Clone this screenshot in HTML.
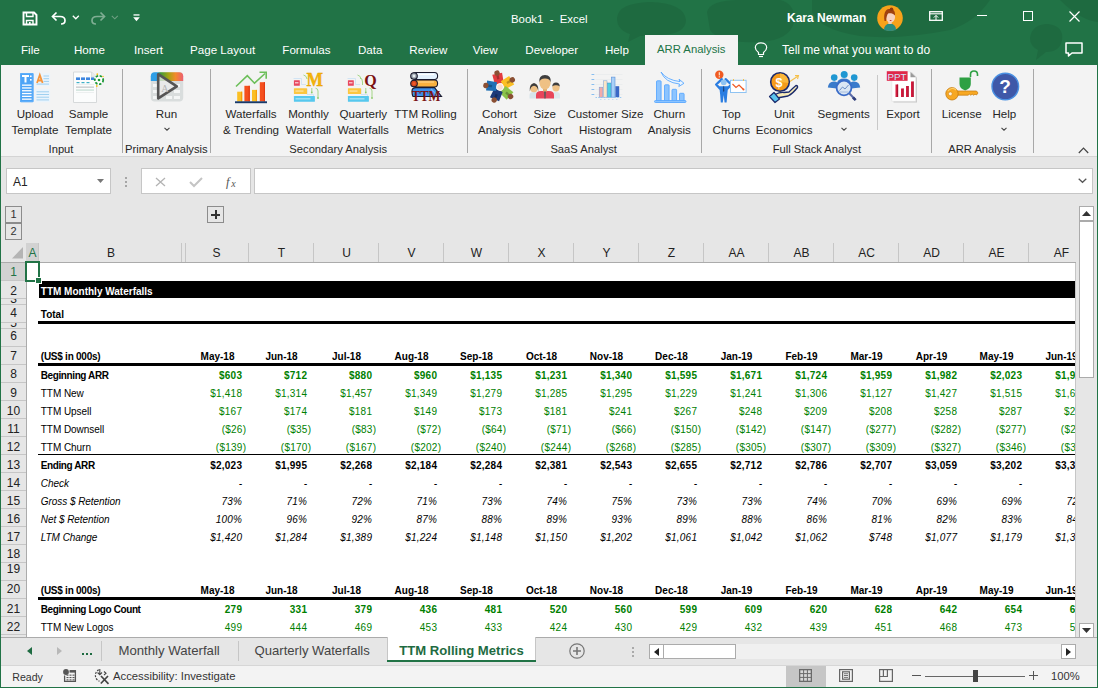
<!DOCTYPE html>
<html><head><meta charset="utf-8"><style>
html,body{margin:0;padding:0;}
body{width:1098px;height:688px;overflow:hidden;position:relative;background:#e6e6e6;font-family:"Liberation Sans",sans-serif;}
.r{position:absolute;}
.t{position:absolute;white-space:pre;}
</style></head><body>
<div class="r" style="left:0px;top:0px;width:1098px;height:65px;background:#217346;"></div><svg class="r" style="left:0px;top:0px;overflow:visible" width="1098" height="65" viewBox="0 0 1098 65">
<g fill="#1c5e39" opacity="0.42">
<path d="M617 18 Q618 3 650 2 Q684 3 686 20 Q686 34 660 35 L640 36 L628 42 L630 34 Q617 30 617 18 Z"/>
<path d="M707 12 Q710 0 740 0 H780 Q796 4 794 22 Q790 40 760 42 Q720 44 710 30 Z"/>
<path d="M812 0 H990 Q975 22 950 30 Q900 40 860 36 Q820 30 812 12 Z"/>
<path d="M1030 38 Q1032 24 1048 24 Q1064 26 1062 40 Q1060 52 1046 52 L1036 60 L1038 50 Q1030 46 1030 38 Z"/>
<path d="M1060 0 H1098 V22 Q1080 20 1060 0 Z"/>
</g></svg><svg class="r" style="left:22px;top:11px;overflow:visible" width="16" height="15" viewBox="0 0 16 15"><path d="M1.5 1.5 H12 L14.5 4 V13.5 H1.5 Z" fill="none" stroke="#fff" stroke-width="1.9"/>
    <path d="M4.5 1.5 V5.5 H11 V1.5" fill="none" stroke="#fff" stroke-width="1.4"/>
    <path d="M4.5 13.5 V9.5 H11 V13.5" fill="none" stroke="#fff" stroke-width="1.4"/>
    <rect x="7" y="11" width="1.6" height="2.5" fill="#fff"/></svg><svg class="r" style="left:51px;top:11px;overflow:visible" width="16" height="14" viewBox="0 0 16 14"><path d="M2 5.5 H9 C12.5 5.5 14 7.5 14 9.5 C14 11.5 12.5 13 10 13" fill="none" stroke="#fff" stroke-width="1.7"/>
    <path d="M5.5 1.5 L1.5 5.5 L5.5 9.5" fill="none" stroke="#fff" stroke-width="1.7"/></svg><svg class="r" style="left:72px;top:15px;overflow:visible" width="8" height="5" viewBox="0 0 8 5"><path d="M0.8 0.8 L3.8 3.8 L6.8 0.8" fill="none" stroke="#fff" stroke-width="1.3"/></svg><svg class="r" style="left:90px;top:11px;overflow:visible" width="16" height="14" viewBox="0 0 16 14"><path d="M14 5.5 H7 C3.5 5.5 2 7.5 2 9.5 C2 11.5 3.5 13 6 13" fill="none" stroke="#7fae93" stroke-width="1.7"/>
    <path d="M10.5 1.5 L14.5 5.5 L10.5 9.5" fill="none" stroke="#7fae93" stroke-width="1.7"/></svg><svg class="r" style="left:111px;top:15px;overflow:visible" width="8" height="5" viewBox="0 0 8 5"><path d="M0.8 0.8 L3.8 3.8 L6.8 0.8" fill="none" stroke="#6f9f83" stroke-width="1.1"/></svg><svg class="r" style="left:133px;top:14px;overflow:visible" width="7" height="8" viewBox="0 0 7 8"><rect x="0.5" y="0.3" width="6" height="1.3" fill="#fff"/><path d="M0.2 3.2 H6.8 L3.5 7.2 Z" fill="#fff"/></svg><div class="t" style="top:13.65px;font-size:11.4px;line-height:11.4px;color:#fff;left:511px;">Book1  -  Excel</div><div class="t" style="top:11.54px;font-size:12px;line-height:12px;color:#fff;font-weight:bold;left:787px;">Kara Newman</div><svg class="r" style="left:877px;top:5px;overflow:visible" width="26" height="26" viewBox="0 0 26 26"><circle cx="13" cy="13" r="12.8" fill="#f7a21b"/>
    <path d="M7 25 Q7 19 13 18.5 Q19 19 19 25 Q13 27 7 25 Z" fill="#2b8b7e"/>
    <rect x="11.3" y="15" width="3.4" height="4" fill="#f3c9b5"/>
    <ellipse cx="13.5" cy="12" rx="4.6" ry="5.6" fill="#f6d2c0"/>
    <path d="M7.5 16 C6.5 9 8 4.5 12 4 C16.5 3.6 18.5 6.5 18 10.5 C16.5 8.5 14 8 11.5 8.2 C10 9 9.5 12 9 16 Z" fill="#a1420f"/>
    <circle cx="14.5" cy="4.2" r="1.8" fill="#8f3a0e"/>
    <rect x="12.8" y="15" width="1.6" height="0.9" fill="#c0262c"/></svg><svg class="r" style="left:929px;top:11px;overflow:visible" width="14" height="10" viewBox="0 0 14 10"><rect x="0.7" y="0.7" width="12.6" height="8.6" fill="none" stroke="#fff" stroke-width="1.3"/>
    <path d="M0.7 2.8 H13.3" stroke="#fff" stroke-width="1.1"/>
    <path d="M7 9 V4.5 M4.8 6.6 L7 4.4 L9.2 6.6" stroke="#fff" stroke-width="1" fill="none"/></svg><div class="r" style="left:977px;top:15px;width:10px;height:1.2px;background:#fff;"></div><div class="r" style="left:1023px;top:11px;width:10px;height:10px;border:1.2px solid #fff;box-sizing:border-box;"></div><svg class="r" style="left:1069px;top:11px;overflow:visible" width="11" height="11" viewBox="0 0 11 11"><path d="M0.5 0.5 L10.5 10.5 M10.5 0.5 L0.5 10.5" stroke="#fff" stroke-width="1.2"/></svg><svg class="r" style="left:754px;top:42px;overflow:visible" width="14" height="16" viewBox="0 0 14 16"><path d="M4.5 10.5 C2.5 9 1.3 7.3 1.3 5.5 C1.3 2.8 3.6 0.8 7 0.8 C10.4 0.8 12.7 2.8 12.7 5.5 C12.7 7.3 11.5 9 9.5 10.5 V12.5 H4.5 Z" fill="none" stroke="#fff" stroke-width="1.2"/>
    <path d="M5 14.5 H9" stroke="#fff" stroke-width="1.2"/></svg><svg class="r" style="left:1065px;top:42px;overflow:visible" width="18" height="15" viewBox="0 0 18 15"><path d="M1 1 H17 V11 H7 L3.5 14 V11 H1 Z" fill="none" stroke="#fff" stroke-width="1.5" stroke-linejoin="round"/></svg><div class="t" style="top:44.18px;font-size:11.6px;line-height:11.6px;color:#fff;left:21px;width:28px;">File</div><div class="t" style="top:44.18px;font-size:11.6px;line-height:11.6px;color:#fff;left:74px;width:43.3px;">Home</div><div class="t" style="top:44.18px;font-size:11.6px;line-height:11.6px;color:#fff;left:134px;width:39px;">Insert</div><div class="t" style="top:44.18px;font-size:11.6px;line-height:11.6px;color:#fff;left:190px;width:75px;">Page Layout</div><div class="t" style="top:44.18px;font-size:11.6px;line-height:11.6px;color:#fff;left:282.3px;width:58.7px;">Formulas</div><div class="t" style="top:44.18px;font-size:11.6px;line-height:11.6px;color:#fff;left:358px;width:34px;">Data</div><div class="t" style="top:44.18px;font-size:11.6px;line-height:11.6px;color:#fff;left:409.3px;width:46.7px;">Review</div><div class="t" style="top:44.18px;font-size:11.6px;line-height:11.6px;color:#fff;left:472.7px;width:35.3px;">View</div><div class="t" style="top:44.18px;font-size:11.6px;line-height:11.6px;color:#fff;left:525.3px;width:62.7px;">Developer</div><div class="t" style="top:44.18px;font-size:11.6px;line-height:11.6px;color:#fff;left:605px;width:35px;">Help</div><div class="r" style="left:645px;top:35px;width:93px;height:30px;background:#f3f3f3;"></div><div class="t" style="top:44.43px;font-size:11.3px;line-height:11.3px;color:#217346;left:657px;">ARR Analysis</div><div class="t" style="top:43.84px;font-size:12px;line-height:12px;color:#fff;left:782px;">Tell me what you want to do</div><div class="r" style="left:1px;top:65px;width:1096px;height:92px;background:#f3f3f3;"></div><div class="r" style="left:1px;top:156px;width:1096px;height:1px;background:#d4d4d4;"></div><div class="r" style="left:122px;top:69px;width:1px;height:84px;background:#a8a8a8;"></div><div class="r" style="left:210px;top:69px;width:1px;height:84px;background:#a8a8a8;"></div><div class="r" style="left:467px;top:69px;width:1px;height:84px;background:#a8a8a8;"></div><div class="r" style="left:701px;top:69px;width:1px;height:84px;background:#a8a8a8;"></div><div class="r" style="left:931px;top:69px;width:1px;height:84px;background:#a8a8a8;"></div><div class="r" style="left:1033px;top:69px;width:1px;height:84px;background:#a8a8a8;"></div><div class="r" style="left:877px;top:75px;width:1px;height:55px;background:#c8c8c8;"></div><div class="t" style="top:107.68px;font-size:11.6px;line-height:11.6px;color:#262626;left:-25.00px;width:120px;text-align:center;">Upload</div><div class="t" style="top:124.08px;font-size:11.6px;line-height:11.6px;color:#262626;left:-25.00px;width:120px;text-align:center;">Template</div><div class="t" style="top:107.68px;font-size:11.6px;line-height:11.6px;color:#262626;left:28.50px;width:120px;text-align:center;">Sample</div><div class="t" style="top:124.08px;font-size:11.6px;line-height:11.6px;color:#262626;left:28.50px;width:120px;text-align:center;">Template</div><div class="t" style="top:107.68px;font-size:11.6px;line-height:11.6px;color:#262626;left:106.50px;width:120px;text-align:center;">Run</div><svg class="r" style="left:163.5px;top:127px;overflow:visible" width="6" height="4" viewBox="0 0 6 4"><path d="M0.5 0.8 L3 3.2 L5.5 0.8" stroke="#444" stroke-width="1.1" fill="none"/></svg><div class="t" style="top:107.68px;font-size:11.6px;line-height:11.6px;color:#262626;left:191.00px;width:120px;text-align:center;">Waterfalls</div><div class="t" style="top:124.08px;font-size:11.6px;line-height:11.6px;color:#262626;left:191.00px;width:120px;text-align:center;">&amp; Trending</div><div class="t" style="top:107.68px;font-size:11.6px;line-height:11.6px;color:#262626;left:248.50px;width:120px;text-align:center;">Monthly</div><div class="t" style="top:124.08px;font-size:11.6px;line-height:11.6px;color:#262626;left:248.50px;width:120px;text-align:center;">Waterfall</div><div class="t" style="top:107.68px;font-size:11.6px;line-height:11.6px;color:#262626;left:303.30px;width:120px;text-align:center;">Quarterly</div><div class="t" style="top:124.08px;font-size:11.6px;line-height:11.6px;color:#262626;left:303.30px;width:120px;text-align:center;">Waterfalls</div><div class="t" style="top:107.68px;font-size:11.6px;line-height:11.6px;color:#262626;left:365.50px;width:120px;text-align:center;">TTM Rolling</div><div class="t" style="top:124.08px;font-size:11.6px;line-height:11.6px;color:#262626;left:365.50px;width:120px;text-align:center;">Metrics</div><div class="t" style="top:107.68px;font-size:11.6px;line-height:11.6px;color:#262626;left:439.50px;width:120px;text-align:center;">Cohort</div><div class="t" style="top:124.08px;font-size:11.6px;line-height:11.6px;color:#262626;left:439.50px;width:120px;text-align:center;">Analysis</div><div class="t" style="top:107.68px;font-size:11.6px;line-height:11.6px;color:#262626;left:484.80px;width:120px;text-align:center;">Size</div><div class="t" style="top:124.08px;font-size:11.6px;line-height:11.6px;color:#262626;left:484.80px;width:120px;text-align:center;">Cohort</div><div class="t" style="top:107.68px;font-size:11.6px;line-height:11.6px;color:#262626;left:545.50px;width:120px;text-align:center;">Customer Size</div><div class="t" style="top:124.08px;font-size:11.6px;line-height:11.6px;color:#262626;left:545.50px;width:120px;text-align:center;">Histogram</div><div class="t" style="top:107.68px;font-size:11.6px;line-height:11.6px;color:#262626;left:609.30px;width:120px;text-align:center;">Churn</div><div class="t" style="top:124.08px;font-size:11.6px;line-height:11.6px;color:#262626;left:609.30px;width:120px;text-align:center;">Analysis</div><div class="t" style="top:107.68px;font-size:11.6px;line-height:11.6px;color:#262626;left:671.30px;width:120px;text-align:center;">Top</div><div class="t" style="top:124.08px;font-size:11.6px;line-height:11.6px;color:#262626;left:671.30px;width:120px;text-align:center;">Churns</div><div class="t" style="top:107.68px;font-size:11.6px;line-height:11.6px;color:#262626;left:724.20px;width:120px;text-align:center;">Unit</div><div class="t" style="top:124.08px;font-size:11.6px;line-height:11.6px;color:#262626;left:724.20px;width:120px;text-align:center;">Economics</div><div class="t" style="top:107.68px;font-size:11.6px;line-height:11.6px;color:#262626;left:783.70px;width:120px;text-align:center;">Segments</div><svg class="r" style="left:840.7px;top:127px;overflow:visible" width="6" height="4" viewBox="0 0 6 4"><path d="M0.5 0.8 L3 3.2 L5.5 0.8" stroke="#444" stroke-width="1.1" fill="none"/></svg><div class="t" style="top:107.68px;font-size:11.6px;line-height:11.6px;color:#262626;left:843.00px;width:120px;text-align:center;">Export</div><div class="t" style="top:107.68px;font-size:11.6px;line-height:11.6px;color:#262626;left:901.70px;width:120px;text-align:center;">License</div><div class="t" style="top:107.68px;font-size:11.6px;line-height:11.6px;color:#262626;left:944.40px;width:120px;text-align:center;">Help</div><svg class="r" style="left:1001.4px;top:127px;overflow:visible" width="6" height="4" viewBox="0 0 6 4"><path d="M0.5 0.8 L3 3.2 L5.5 0.8" stroke="#444" stroke-width="1.1" fill="none"/></svg><div class="t" style="top:143.82px;font-size:11.2px;line-height:11.2px;color:#262626;left:-19.00px;width:160px;text-align:center;">Input</div><div class="t" style="top:143.82px;font-size:11.2px;line-height:11.2px;color:#262626;left:86.30px;width:160px;text-align:center;">Primary Analysis</div><div class="t" style="top:143.82px;font-size:11.2px;line-height:11.2px;color:#262626;left:258.20px;width:160px;text-align:center;">Secondary Analysis</div><div class="t" style="top:143.82px;font-size:11.2px;line-height:11.2px;color:#262626;left:503.70px;width:160px;text-align:center;">SaaS Analyst</div><div class="t" style="top:143.82px;font-size:11.2px;line-height:11.2px;color:#262626;left:736.90px;width:160px;text-align:center;">Full Stack Analyst</div><div class="t" style="top:143.82px;font-size:11.2px;line-height:11.2px;color:#262626;left:902.20px;width:160px;text-align:center;">ARR Analysis</div><svg class="r" style="left:1078px;top:147px;overflow:visible" width="11" height="7" viewBox="0 0 11 7"><path d="M0.8 6 L5.5 1.2 L10.2 6" stroke="#444" stroke-width="1.2" fill="none"/></svg><svg class="r" style="left:19px;top:72px;overflow:visible" width="33" height="32" viewBox="0 0 33 32">
    <rect x="1" y="1" width="13.6" height="29.2" rx="1" fill="#4ea4f6"/>
    <rect x="1.6" y="1.6" width="12.4" height="28" rx="0.8" fill="none" stroke="#6fb8ff" stroke-width="0.6"/>
    <path d="M3 3 H10 V5 H7.5 V10.5 H5.5 V5 H3 Z" fill="#fff"/>
    <rect x="11" y="3.5" width="1.6" height="1.6" fill="#fff"/><rect x="11" y="7" width="1.6" height="1.6" fill="#fff"/>
    <g fill="#fff"><rect x="3" y="12.5" width="9.6" height="1.3"/><rect x="3" y="15.3" width="9.6" height="1.3"/><rect x="3" y="18.1" width="9.6" height="1.3"/>
    <rect x="3" y="20.9" width="9.6" height="1.3"/><rect x="3" y="23.7" width="9.6" height="1.3"/><rect x="3" y="26.5" width="9.6" height="1.3"/></g>
    <rect x="16.5" y="1.2" width="14.6" height="12.8" fill="#eaf4fc"/>
    <path d="M18 11 L20.8 3 L23.6 11 M19 8.5 H22.6" stroke="#f7953a" stroke-width="1.8" fill="none"/>
    <g fill="#9fd0f0"><rect x="24.5" y="3.5" width="5.5" height="1"/><rect x="24.5" y="6.2" width="5.5" height="1"/><rect x="24.5" y="8.9" width="5.5" height="1"/><rect x="17.5" y="11.6" width="12.5" height="1"/></g>
    <rect x="16.5" y="17" width="14.6" height="13.2" fill="#eaf4fc"/>
    <g fill="#9fd0f0"><rect x="17.5" y="19.3" width="12.5" height="1"/><rect x="17.5" y="22" width="12.5" height="1"/><rect x="17.5" y="24.7" width="12.5" height="1"/><rect x="17.5" y="27.4" width="12.5" height="1"/></g>
    </svg><svg class="r" style="left:72px;top:71px;overflow:visible" width="32" height="33" viewBox="0 0 32 33">
    <path d="M1.5 1 H19.5 L24.5 6 V31.5 H1.5 Z" fill="#fbfcfc" stroke="#d6d9da" stroke-width="1"/>
    <path d="M19.5 1 V6 H24.5" fill="#e8eaeb" stroke="#d6d9da" stroke-width="0.8"/>
    <g fill="#3d86e0"><rect x="4" y="6.4" width="4" height="2.6"/><rect x="9" y="6.4" width="4" height="2.6"/><rect x="14" y="6.4" width="4" height="2.6"/><rect x="19" y="6.4" width="3" height="2.6"/></g>
    <g fill="#3fb0c8"><rect x="4.5" y="11" width="3" height="1.2"/><rect x="9.5" y="11" width="3" height="1.2"/><rect x="14.5" y="11" width="3" height="1.2"/></g>
    <g fill="#c4c8ca"><rect x="4" y="15.5" width="18" height="1.3"/></g>
    <g fill="#bfd9cf"><rect x="4" y="18.5" width="18" height="1.1"/></g>
    <g fill="#e3e6e7"><rect x="4" y="13.2" width="18" height="0.6"/><rect x="4" y="21" width="18" height="0.6"/></g>
    <circle cx="27" cy="9" r="4.2" fill="#fff" stroke="#1f9a3a" stroke-width="1.8" stroke-dasharray="2.4 1.6"/>
    <circle cx="27" cy="9" r="1.3" fill="#1f9a3a"/>
    <circle cx="25.3" cy="3.2" r="0.9" fill="#f7c21b"/><circle cx="31" cy="5.5" r="0.8" fill="#f7c21b"/><circle cx="24.8" cy="15" r="0.9" fill="#f7c21b"/>
    </svg><svg class="r" style="left:150px;top:72px;overflow:visible" width="34" height="30" viewBox="0 0 34 30">
    <defs><linearGradient id="rg" x1="0" x2="1" y1="0" y2="0">
    <stop offset="0" stop-color="#2e9ee6"/><stop offset="0.22" stop-color="#2e9ee6"/><stop offset="0.3" stop-color="#3d9a3a"/>
    <stop offset="0.55" stop-color="#a7a312"/><stop offset="0.75" stop-color="#f28a2c"/><stop offset="1" stop-color="#ec5a78"/></linearGradient>
    <clipPath id="rc"><rect x="0.8" y="0.2" width="32.4" height="29.2" rx="4"/></clipPath></defs>
    <g clip-path="url(#rc)">
    <rect x="0" y="0" width="34" height="30" fill="#d9dddd"/>
    <rect x="0" y="0" width="34" height="9" fill="url(#rg)"/>
    <g fill="#f4f6f6"><rect x="3" y="12" width="5" height="3"/><rect x="3" y="18" width="5" height="3"/><rect x="3" y="24" width="5" height="3"/>
    <rect x="24" y="12" width="6" height="3"/><rect x="24" y="18" width="6" height="3"/><rect x="24" y="24" width="6" height="3"/><rect x="16" y="24" width="6" height="3"/></g>
    </g>
    <path d="M8.2 2.2 L26.8 14.3 L8.2 26.4 Z" fill="#ececec" fill-opacity="0.75" stroke="#555" stroke-width="2.6" stroke-linejoin="round"/>
    <text x="11.2" y="19.5" font-family="Liberation Serif" font-size="10" fill="#b5b5b5">A</text>
    </svg><svg class="r" style="left:234px;top:71px;overflow:visible" width="34" height="33" viewBox="0 0 34 33">
    <path d="M2 15.5 L13.3 4.7 L20.5 12.2 L31 2.5" fill="none" stroke="#6cbf5a" stroke-width="1.6"/>
    <path d="M25.5 1.2 H32.2 V7.8" fill="none" stroke="#6cbf5a" stroke-width="1.6"/>
    <rect x="3.2" y="20.7" width="5" height="9.8" fill="#fbbf24"/><rect x="7" y="20.7" width="1.2" height="9.8" fill="#f59e0b"/>
    <rect x="10.4" y="14.8" width="5.4" height="15.7" fill="#f5501e"/><rect x="14.6" y="14.8" width="1.2" height="15.7" fill="#e23a12"/>
    <rect x="18" y="18.9" width="5" height="11.6" fill="#fbbf24"/><rect x="21.8" y="18.9" width="1.2" height="11.6" fill="#f59e0b"/>
    <rect x="25.8" y="11.2" width="5.2" height="19.3" fill="#f5501e"/><rect x="29.8" y="11.2" width="1.2" height="19.3" fill="#e23a12"/>
    <rect x="1" y="30.3" width="32" height="1.9" fill="#183a6b"/>
    </svg><svg class="r" style="left:293px;top:76px;overflow:visible" width="30" height="27" viewBox="0 0 30 27">
        <g fill="none" stroke="#c9e0f2" stroke-width="0.8">
        <path d="M0.5 2.5 H8.5 V8.5 H13"/><path d="M14 13 V18.5 H20.5 V24.5"/></g>
        <rect x="0.9" y="4.3" width="5.9" height="5.5" rx="0.5" fill="#e8475f"/><rect x="2" y="6.2" width="3.5" height="1.2" fill="#fff" opacity="0.8"/>
        <rect x="0.9" y="12.2" width="13.2" height="5.8" rx="0.5" fill="#fcc640"/><rect x="2.5" y="14.5" width="8" height="1.1" fill="#fff" opacity="0.6"/>
        <rect x="0.9" y="20" width="21" height="5.7" rx="0.5" fill="#56c8ee"/><rect x="2.5" y="22.3" width="15" height="1.1" fill="#fff" opacity="0.6"/>
        <g fill="none" stroke="#9bd27a" stroke-width="0.9">
        <path d="M10.5 -1 Q13.5 -0.5 14 3"/><path d="M18.8 12 V16"/><path d="M22.5 12.2 Q25 12.5 25 15 V21.5"/></g>
        <g fill="#8cc96a"><circle cx="18.8" cy="16.5" r="0.9"/><circle cx="25" cy="22" r="0.9"/></g>
        <text x="13.5" y="10" font-family="Liberation Serif" font-weight="bold" font-size="19" fill="#f5b50a" stroke="#e39c00" stroke-width="0.4" textLength="16.5" lengthAdjust="spacingAndGlyphs">M</text></svg><svg class="r" style="left:347.2px;top:76px;overflow:visible" width="30" height="27" viewBox="0 0 30 27">
        <g fill="none" stroke="#c9e0f2" stroke-width="0.8">
        <path d="M0.5 2.5 H8.5 V8.5 H13"/><path d="M14 13 V18.5 H20.5 V24.5"/></g>
        <rect x="0.9" y="4.3" width="5.9" height="5.5" rx="0.5" fill="#e8475f"/><rect x="2" y="6.2" width="3.5" height="1.2" fill="#fff" opacity="0.8"/>
        <rect x="0.9" y="12.2" width="13.2" height="5.8" rx="0.5" fill="#fcc640"/><rect x="2.5" y="14.5" width="8" height="1.1" fill="#fff" opacity="0.6"/>
        <rect x="0.9" y="20" width="21" height="5.7" rx="0.5" fill="#56c8ee"/><rect x="2.5" y="22.3" width="15" height="1.1" fill="#fff" opacity="0.6"/>
        <g fill="none" stroke="#9bd27a" stroke-width="0.9">
        <path d="M10.5 -1 Q13.5 -0.5 14 3"/><path d="M18.8 12 V16"/><path d="M22.5 12.2 Q25 12.5 25 15 V21.5"/></g>
        <g fill="#8cc96a"><circle cx="18.8" cy="16.5" r="0.9"/><circle cx="25" cy="22" r="0.9"/></g>
        <path d="M13 2 Q15.5 2 15.5 6 V9" fill="none" stroke="#9bd27a" stroke-width="0.9"/><text x="17.3" y="9.8" font-family="Liberation Serif" font-weight="bold" font-size="17.5" fill="#7a1010" textLength="12.5" lengthAdjust="spacingAndGlyphs">Q</text></svg><svg class="r" style="left:409px;top:71px;overflow:visible" width="34" height="32" viewBox="0 0 34 32">
    <path d="M3 5 Q3 1.5 7 1.5 H25.5 Q28.6 1.5 28.6 5 Q28.6 8.5 25.5 8.5 H7 Q3 8.5 3 5 Z" fill="#e4f1fd" stroke="#1b1b2e" stroke-width="1.1"/>
    <path d="M8 3.5 H25" stroke="#fff" stroke-width="1.2"/>
    <circle cx="5" cy="5" r="3.3" fill="#9aa3ad" stroke="#1b1b2e" stroke-width="1.1"/><circle cx="5" cy="5" r="1.4" fill="#e9eef2"/>
    <path d="M3 12.5 Q3 9 7 9 H25.5 Q28.6 9 28.6 12.5 Q28.6 16 25.5 16 H7 Q3 16 3 12.5 Z" fill="#f9b13e" stroke="#1b1b2e" stroke-width="1.1"/>
    <path d="M9 11 H25" stroke="#fdd488" stroke-width="1.2"/>
    <circle cx="5" cy="12.5" r="3.3" fill="#d9481c" stroke="#1b1b2e" stroke-width="1.1"/><circle cx="5" cy="12.5" r="1.3" fill="#f35c2c"/>
    <path d="M3 20 Q3 16.6 7 16.6 H25.5 L32.5 25.5 H4 Q3 24 3 20 Z" fill="#3c8fea" stroke="#1b1b2e" stroke-width="1.1"/>
    <path d="M22 18 L29 25" stroke="#74b3f5" stroke-width="1.3"/>
    <text x="2.8" y="29.8" font-family="Liberation Serif" font-weight="bold" font-size="15.5" fill="#7c1414" textLength="28.5" lengthAdjust="spacingAndGlyphs">TTM</text>
    </svg><svg class="r" style="left:483px;top:70px;overflow:visible" width="34" height="34" viewBox="0 0 34 34">
    <g transform="translate(17 17)">
      <g transform="rotate(-12)"><path d="M-5 -13.5 H5 L4.5 -3.5 H-4.5 Z" fill="#e23b3f"/><rect x="-1.2" y="-12" width="2.4" height="4" fill="#000" opacity="0.25"/><circle cx="0" cy="-14.2" r="2.7" fill="#8a4f34"/></g><g transform="rotate(60)"><path d="M-5 -13.5 H5 L4.5 -3.5 H-4.5 Z" fill="#fbbf24"/><rect x="-1.2" y="-12" width="2.4" height="4" fill="#000" opacity="0.25"/><circle cx="0" cy="-14.2" r="2.7" fill="#8a4f34"/></g><g transform="rotate(132)"><path d="M-5 -13.5 H5 L4.5 -3.5 H-4.5 Z" fill="#8bc34a"/><rect x="-1.2" y="-12" width="2.4" height="4" fill="#000" opacity="0.25"/><circle cx="0" cy="-14.2" r="2.7" fill="#8a4f34"/></g><g transform="rotate(204)"><path d="M-5 -13.5 H5 L4.5 -3.5 H-4.5 Z" fill="#1e3a7a"/><rect x="-1.2" y="-12" width="2.4" height="4" fill="#000" opacity="0.25"/><circle cx="0" cy="-14.2" r="2.7" fill="#8a4f34"/></g><g transform="rotate(276)"><path d="M-5 -13.5 H5 L4.5 -3.5 H-4.5 Z" fill="#1f6fb5"/><rect x="-1.2" y="-12" width="2.4" height="4" fill="#000" opacity="0.25"/><circle cx="0" cy="-14.2" r="2.7" fill="#8a4f34"/></g>
      <circle cx="0" cy="0" r="3.4" fill="#f7ddd0" stroke="#ffffff" stroke-width="0.8"/>
    </g>
    </svg><svg class="r" style="left:528px;top:74px;overflow:visible" width="34" height="26" viewBox="0 0 34 26">
    <path d="M1.5 24.5 V21 Q1.5 18 5.5 18 H6.5 Q10.5 18 10.5 21 V24.5 Z" fill="#d7e4ea"/>
    <ellipse cx="6" cy="14" rx="3.9" ry="4.3" fill="#efc185"/>
    <path d="M1.8 17.5 Q1 10 6 9 Q11 10 10.3 17.5 Q9.5 12 6 11.8 Q2.6 12 1.8 17.5 Z" fill="#3d3d3d"/>
    <path d="M24 24.5 V21 Q24 18 27.5 18 H28.5 Q32 18 32 21 V24.5 Z" fill="#dde8ee"/>
    <ellipse cx="28" cy="13.5" rx="3.6" ry="4.1" fill="#efc185"/>
    <path d="M24.2 12.5 Q24.5 8.8 28 8.6 Q31.6 8.8 31.8 12.5 Q30 11 28 11.2 Q26 11 24.2 12.5 Z" fill="#3d3d3d"/>
    <path d="M8 24.5 V21 Q8 17 13 17 H21 Q26 17 26 21 V24.5 Z" fill="#e8455a"/>
    <path d="M16 17 H18 L17.6 24.5 H16.4 Z" fill="#5a5a5a"/>
    <rect x="15" y="13.5" width="4" height="4" fill="#e3ad6e"/>
    <ellipse cx="17" cy="9" rx="5.6" ry="6.4" fill="#efc185"/>
    <path d="M11.3 8.5 Q10.5 1 17 1 Q23.5 1 22.7 8.5 Q22 4.5 17 4.4 Q12 4.5 11.3 8.5 Z" fill="#3d3d3d"/>
    </svg><svg class="r" style="left:590px;top:72px;overflow:visible" width="34" height="28" viewBox="0 0 34 28">
    <g fill="#7cb8f0"><rect x="1.5" y="2" width="2.8" height="0.9"/><rect x="1.5" y="7" width="2.8" height="0.9"/><rect x="1.5" y="12" width="2.8" height="0.9"/><rect x="1.5" y="17" width="2.8" height="0.9"/><rect x="1.5" y="22" width="2.8" height="0.9"/></g>
    <g fill="#e6e9ec"><rect x="5.5" y="2.2" width="27" height="0.6"/><rect x="5.5" y="7.2" width="27" height="0.6"/><rect x="5.5" y="12.2" width="27" height="0.6"/><rect x="5.5" y="17.2" width="27" height="0.6"/><rect x="5.5" y="22.2" width="27" height="0.6"/></g>
    <rect x="9.2" y="15.2" width="3.6" height="10" fill="#f2aaa8" stroke="#7aa0d8" stroke-width="0.5"/>
    <rect x="13.4" y="8.8" width="3.6" height="16.4" fill="#fce6c6" stroke="#7aa0d8" stroke-width="0.5"/>
    <rect x="17.4" y="11" width="3.6" height="14.2" fill="#4fcfe0" stroke="#4a90c8" stroke-width="0.5"/>
    <rect x="21.4" y="5.1" width="3.6" height="20.1" fill="#a9d0f8" stroke="#5a90d8" stroke-width="0.6"/>
    <rect x="25.4" y="14.2" width="3.8" height="11" fill="#3a68c6"/>
    <path d="M5.5 25.5 H32.5" stroke="#8ec4f0" stroke-width="0.9" stroke-dasharray="1.5 1.2"/>
    <g fill="#b8d8f4"><rect x="10" y="27" width="1.5" height="0.8"/><rect x="14" y="27" width="1.5" height="0.8"/><rect x="18" y="27" width="1.5" height="0.8"/><rect x="22" y="27" width="1.5" height="0.8"/><rect x="26" y="27" width="1.5" height="0.8"/></g>
    </svg><svg class="r" style="left:653px;top:70px;overflow:visible" width="34" height="34" viewBox="0 0 34 34">
    <g fill="#8cc4ff" stroke="#5aa8ff" stroke-width="0.9">
    <rect x="3.5" y="10.8" width="4.6" height="20.5" rx="0.8"/><rect x="11.5" y="14.8" width="4.6" height="16.5" rx="0.8"/>
    <rect x="19" y="19.3" width="4.6" height="12" rx="0.8"/><rect x="26.5" y="23.3" width="4.6" height="8" rx="0.8"/>
    <rect x="1.5" y="30.5" width="31.5" height="2" rx="1"/></g>
    <path d="M8 2 Q13.5 10 27 11.6 L26 9.2 L31 13.3 L25.8 16.5 L26.5 14 Q12 12.5 8 2 Z" fill="#eaf4ff" stroke="#5aa8ff" stroke-width="0.9" stroke-linejoin="round"/>
    </svg><svg class="r" style="left:713px;top:70px;overflow:visible" width="35" height="34" viewBox="0 0 35 34">
    <circle cx="6.3" cy="4.8" r="4.2" fill="#f05a22"/>
    <rect x="5.7" y="2.2" width="1.3" height="3.2" fill="#fbd6b8"/><rect x="5.7" y="6.2" width="1.3" height="1.2" fill="#fbd6b8"/>
    <path d="M6.8 18.5 L3.2 14.5 L8.8 9.2 M14.6 18.5 L18.2 14.5 L12.6 9.2" fill="none" stroke="#2a7de1" stroke-width="2.4" stroke-linejoin="round" stroke-linecap="round"/>
    <path d="M6.2 16.2 H15.2 L14.3 24 L13.6 32.5 H11.6 L10.7 25 L9.8 32.5 H7.8 L7.1 24 Z" fill="#2a7de1"/>
    <circle cx="10.7" cy="12.3" r="2.9" fill="#8fc3f2"/>
    <path d="M10.3 16.3 H11.1 L11.3 21 L10.7 22 L10.1 21 Z" fill="#1b3a6b"/>
    <rect x="17.5" y="10.3" width="15.6" height="12.2" fill="#fff" stroke="#8fc3f2" stroke-width="1"/>
    <rect x="20" y="9" width="1" height="2" fill="#f5c04a"/><rect x="30" y="9" width="1" height="2" fill="#f5c04a"/>
    <path d="M19.5 14 L23 17.5 L26 15 L30.5 19.5" fill="none" stroke="#ef5a24" stroke-width="1.2"/>
    <circle cx="30.5" cy="19.5" r="1" fill="#ef5a24"/>
    </svg><svg class="r" style="left:768px;top:71px;overflow:visible" width="32" height="32" viewBox="0 0 32 32">
    <path d="M21.5 10.8 L26 7.8 L29.8 5.2" fill="none" stroke="#f5c04a" stroke-width="1.1"/>
    <path d="M27 4.6 L30.5 4.6 L29.5 8" fill="none" stroke="#f5c04a" stroke-width="1.1"/>
    <path d="M7 23.5 Q12 21 16 21.5 L21 21 Q25 17 28 14.5 Q30 14.5 29.5 16.5 Q25 22.5 20 25 L9 27 Z" fill="#f8ebb8" stroke="#1a2a6c" stroke-width="1.3" stroke-linejoin="round"/>
    <circle cx="12" cy="11" r="9.3" fill="#f59b1b" stroke="#1a2a6c" stroke-width="1.6"/>
    <path d="M12 2.5 A8.5 8.5 0 0 1 20.3 12 L12 11 Z" fill="#fbb73b"/>
    <text x="7.6" y="16.2" font-family="Liberation Sans" font-weight="bold" font-size="12.5" fill="#fff">$</text>
    <path d="M1.5 25.5 L6 21.5 L11.5 28 L7 31.5 Z" fill="#5bc4ee" stroke="#1a2a6c" stroke-width="1.2" stroke-linejoin="round"/>
    </svg><svg class="r" style="left:827px;top:71px;overflow:visible" width="34" height="32" viewBox="0 0 34 32">
    <g fill="#1f97d2"><circle cx="7.2" cy="6.6" r="3.3"/><circle cx="17.2" cy="3.4" r="3.5"/><circle cx="27.2" cy="6.6" r="3.3"/></g>
    <g fill="#3a7bcb"><path d="M0.8 16.5 Q1.5 10.5 7 10.5 Q11 10.5 12.5 14 L10 17.5 Z"/><path d="M33.2 16.5 Q32.5 10.5 27 10.5 Q23 10.5 21.5 14 L24 17.5 Z"/>
    <path d="M10 12 Q11 7.5 17 7.5 Q23 7.5 24 12 Z"/></g>
    <circle cx="17" cy="17" r="7.4" fill="#dbe7f4" stroke="#3a6cc8" stroke-width="1.8"/>
    <path d="M12.5 19.5 L15.5 16 L18 18 L21.5 14" fill="none" stroke="#6d8fc4" stroke-width="1"/>
    <path d="M12.5 21 H21.5" stroke="#9ab2d8" stroke-width="0.8"/>
    <path d="M22.5 22.5 L28 28.5" stroke="#5a6aa8" stroke-width="2"/>
    <path d="M26 26.5 L28.7 29.2" stroke="#2f3e7a" stroke-width="2.6"/>
    </svg><svg class="r" style="left:886px;top:71px;overflow:visible" width="32" height="32" viewBox="0 0 32 32">
    <path d="M7.5 1.5 H26 L31 6.5 V31.5 H7.5 Z" fill="#c8c8c8"/>
    <path d="M5.8 1 H24.5 L29.8 6.3 V30.3 H5.8 Z" fill="#fff" stroke="#e2e2e2" stroke-width="0.6"/>
    <path d="M24.5 1 V6.3 H29.8 Z" fill="#9a9a9a"/>
    <rect x="0.8" y="0.2" width="20.8" height="9.6" fill="#e0284a"/>
    <text x="1.6" y="8.6" font-family="Liberation Sans" font-size="9.4" fill="#cfe6ff" textLength="19" lengthAdjust="spacingAndGlyphs">PPT</text>
    <g fill="#d81c3f"><rect x="9.5" y="13.5" width="2.6" height="12.5"/><rect x="15" y="17.5" width="2.6" height="8.5"/><rect x="20" y="15" width="2.6" height="11"/><rect x="25" y="10.5" width="2.6" height="15.5"/></g>
    <g fill="#a0122c"><rect x="11.2" y="13.5" width="0.9" height="12.5"/><rect x="16.7" y="17.5" width="0.9" height="8.5"/><rect x="21.7" y="15" width="0.9" height="11"/><rect x="26.7" y="10.5" width="0.9" height="15.5"/></g>
    </svg><svg class="r" style="left:945px;top:70px;overflow:visible" width="34" height="33" viewBox="0 0 34 33">
    <path d="M25.5 7 V4.5 Q25.5 1 29 1 Q32.5 1 32.5 4.5 V6" fill="none" stroke="#2ea043" stroke-width="1.6"/>
    <path d="M14.5 7.5 H25.8 V14 Q25.8 18.5 20.2 20.5 Q14.5 18.5 14.5 14 Z" fill="#2ea043"/>
    <path d="M12 21 H31.5 L33 23 L31.5 25 L30 24.2 L28.6 25.2 L27.2 24.2 L25.8 25.2 L24.4 24.2 L23 25.2 L12 25.2 Z" fill="#f7a823" stroke="#c47a10" stroke-width="0.7" stroke-linejoin="round"/>
    <circle cx="7" cy="23.8" r="6.2" fill="#f7a823" stroke="#c47a10" stroke-width="0.8"/>
    <path d="M3 21 A5 5 0 0 1 11 20" fill="none" stroke="#fdcf6a" stroke-width="1.2"/>
    <circle cx="5.3" cy="23.8" r="1.9" fill="#fff3dc" stroke="#c47a10" stroke-width="0.5"/>
    </svg><svg class="r" style="left:991px;top:72px;overflow:visible" width="29" height="29" viewBox="0 0 29 29">
    <circle cx="14.3" cy="14.5" r="13.3" fill="#3f58a8" stroke="#4a90e2" stroke-width="1.4"/>
    <text x="8.3" y="21.3" font-family="Liberation Sans" font-weight="bold" font-size="19" fill="#fff">?</text>
    </svg><div class="r" style="left:1px;top:157px;width:1096px;height:106px;background:#e6e6e6;"></div><div class="r" style="left:6px;top:168px;width:105px;height:26px;background:#fff;border:1px solid #c6c6c6;box-sizing:border-box;"></div><div class="t" style="top:175.84px;font-size:12px;line-height:12px;color:#222;left:13px;">A1</div><svg class="r" style="left:97px;top:178.5px;overflow:visible" width="7" height="4" viewBox="0 0 7 4"><path d="M0 0 L7 0 L3.5 4 Z" fill="#777"/></svg><div class="r" style="left:125px;top:177px;width:2px;height:2px;background:#a6a6a6;"></div><div class="r" style="left:125px;top:181px;width:2px;height:2px;background:#a6a6a6;"></div><div class="r" style="left:125px;top:185px;width:2px;height:2px;background:#a6a6a6;"></div><div class="r" style="left:141px;top:168px;width:110px;height:26px;background:#fff;border:1px solid #c6c6c6;box-sizing:border-box;"></div><svg class="r" style="left:155px;top:177px;overflow:visible" width="11" height="10" viewBox="0 0 11 10"><path d="M1 1 L10 9 M10 1 L1 9" stroke="#b3b3b3" stroke-width="1.3"/></svg><svg class="r" style="left:189px;top:177px;overflow:visible" width="14" height="10" viewBox="0 0 14 10"><path d="M1 5 L5 9 L13 1" stroke="#c4c4c4" stroke-width="2" fill="none"/></svg><div class="t" style="top:175.92px;font-size:12.5px;line-height:12.5px;color:#555;font-style:italic;left:226px;font-family:Liberation Serif;">f</div><div class="t" style="top:178.53px;font-size:10px;line-height:10px;color:#555;font-style:italic;left:231.2px;font-family:Liberation Serif;">x</div><div class="r" style="left:254px;top:168px;width:839px;height:26px;background:#fff;border:1px solid #c6c6c6;box-sizing:border-box;"></div><svg class="r" style="left:1078px;top:178px;overflow:visible" width="9" height="5" viewBox="0 0 9 5"><path d="M0.7 0.7 L4.5 4.3 L8.3 0.7" stroke="#555" stroke-width="1.2" fill="none"/></svg><div class="r" style="left:5px;top:206px;width:17px;height:17px;border:1px solid #8c8c8c;box-sizing:border-box;background:#e6e6e6;"></div><div class="t" style="top:209.19px;font-size:11px;line-height:11px;color:#333;left:5.50px;width:16px;text-align:center;">1</div><div class="r" style="left:5px;top:223px;width:17px;height:17px;border:1px solid #8c8c8c;box-sizing:border-box;background:#e6e6e6;"></div><div class="t" style="top:226.19px;font-size:11px;line-height:11px;color:#333;left:5.50px;width:16px;text-align:center;">2</div><div class="r" style="left:207px;top:206px;width:17px;height:17px;border:1px solid #8c8c8c;box-sizing:border-box;"></div><div class="r" style="left:211px;top:213.5px;width:9px;height:2px;background:#333;"></div><div class="r" style="left:214.5px;top:210px;width:2px;height:9px;background:#333;"></div><div class="r" style="left:1px;top:243px;width:1075px;height:19px;background:#e6e6e6;"></div><div class="r" style="left:26px;top:243px;width:13px;height:19px;background:#d2d2d2;"></div><svg class="r" style="left:12px;top:247px;overflow:visible" width="11" height="12" viewBox="0 0 11 12"><path d="M11 0 L11 11.5 L0 11.5 Z" fill="#b4b4b4"/></svg><div class="r" style="left:1px;top:262px;width:1075px;height:1px;background:#ababab;"></div><div class="t" style="top:246.84px;font-size:12px;line-height:12px;color:#217346;left:22.50px;width:20px;text-align:center;">A</div><div class="t" style="top:246.84px;font-size:12px;line-height:12px;color:#222;left:101.00px;width:20px;text-align:center;">B</div><div class="r" style="left:38px;top:243px;width:1px;height:19px;background:#c6c6c6;"></div><div class="r" style="left:181px;top:243px;width:1px;height:19px;background:#c6c6c6;"></div><div class="r" style="left:185px;top:243px;width:1px;height:19px;background:#c6c6c6;"></div><div class="r" style="left:248px;top:243px;width:1px;height:19px;background:#c6c6c6;"></div><div class="t" style="top:246.84px;font-size:12px;line-height:12px;color:#222;left:196.50px;width:40px;text-align:center;">S</div><div class="r" style="left:313px;top:243px;width:1px;height:19px;background:#c6c6c6;"></div><div class="t" style="top:246.84px;font-size:12px;line-height:12px;color:#222;left:261.50px;width:40px;text-align:center;">T</div><div class="r" style="left:378px;top:243px;width:1px;height:19px;background:#c6c6c6;"></div><div class="t" style="top:246.84px;font-size:12px;line-height:12px;color:#222;left:326.50px;width:40px;text-align:center;">U</div><div class="r" style="left:443px;top:243px;width:1px;height:19px;background:#c6c6c6;"></div><div class="t" style="top:246.84px;font-size:12px;line-height:12px;color:#222;left:391.50px;width:40px;text-align:center;">V</div><div class="r" style="left:508px;top:243px;width:1px;height:19px;background:#c6c6c6;"></div><div class="t" style="top:246.84px;font-size:12px;line-height:12px;color:#222;left:456.50px;width:40px;text-align:center;">W</div><div class="r" style="left:573px;top:243px;width:1px;height:19px;background:#c6c6c6;"></div><div class="t" style="top:246.84px;font-size:12px;line-height:12px;color:#222;left:521.50px;width:40px;text-align:center;">X</div><div class="r" style="left:638px;top:243px;width:1px;height:19px;background:#c6c6c6;"></div><div class="t" style="top:246.84px;font-size:12px;line-height:12px;color:#222;left:586.50px;width:40px;text-align:center;">Y</div><div class="r" style="left:703px;top:243px;width:1px;height:19px;background:#c6c6c6;"></div><div class="t" style="top:246.84px;font-size:12px;line-height:12px;color:#222;left:651.50px;width:40px;text-align:center;">Z</div><div class="r" style="left:768px;top:243px;width:1px;height:19px;background:#c6c6c6;"></div><div class="t" style="top:246.84px;font-size:12px;line-height:12px;color:#222;left:716.50px;width:40px;text-align:center;">AA</div><div class="r" style="left:833px;top:243px;width:1px;height:19px;background:#c6c6c6;"></div><div class="t" style="top:246.84px;font-size:12px;line-height:12px;color:#222;left:781.50px;width:40px;text-align:center;">AB</div><div class="r" style="left:898px;top:243px;width:1px;height:19px;background:#c6c6c6;"></div><div class="t" style="top:246.84px;font-size:12px;line-height:12px;color:#222;left:846.50px;width:40px;text-align:center;">AC</div><div class="r" style="left:963px;top:243px;width:1px;height:19px;background:#c6c6c6;"></div><div class="t" style="top:246.84px;font-size:12px;line-height:12px;color:#222;left:911.50px;width:40px;text-align:center;">AD</div><div class="r" style="left:1028px;top:243px;width:1px;height:19px;background:#c6c6c6;"></div><div class="t" style="top:246.84px;font-size:12px;line-height:12px;color:#222;left:976.50px;width:40px;text-align:center;">AE</div><div class="t" style="top:246.84px;font-size:12px;line-height:12px;color:#222;left:1041.50px;width:40px;text-align:center;">AF</div><div class="r" style="left:1px;top:263px;width:25px;height:374px;background:#e6e6e6;"></div><div class="r" style="left:1px;top:263px;width:25px;height:17px;background:#d2d2d2;"></div><div class="r" style="left:26px;top:263px;width:1px;height:374px;background:#ababab;"></div><div class="r" style="left:1px;top:280px;width:25px;height:1px;background:#c6c6c6;"></div><div class="r" style="left:1px;top:263px;width:25px;height:17px;overflow:hidden"><div class="t" style="left:0;top:3.34px;width:25px;text-align:center;font-size:12px;line-height:12px;color:#217346">1</div></div><div class="r" style="left:1px;top:298px;width:25px;height:1px;background:#c6c6c6;"></div><div class="r" style="left:1px;top:281px;width:25px;height:17px;overflow:hidden"><div class="t" style="left:0;top:3.84px;width:25px;text-align:center;font-size:12px;line-height:12px;color:#222">2</div></div><div class="r" style="left:1px;top:304px;width:25px;height:1px;background:#c6c6c6;"></div><div class="r" style="left:1px;top:299px;width:25px;height:5px;overflow:hidden"><div class="t" style="left:0;top:-5.66px;width:25px;text-align:center;font-size:12px;line-height:12px;color:#222">3</div></div><div class="r" style="left:1px;top:322px;width:25px;height:1px;background:#c6c6c6;"></div><div class="r" style="left:1px;top:305px;width:25px;height:17px;overflow:hidden"><div class="t" style="left:0;top:2.04px;width:25px;text-align:center;font-size:12px;line-height:12px;color:#222">4</div></div><div class="r" style="left:1px;top:328px;width:25px;height:1px;background:#c6c6c6;"></div><div class="r" style="left:1px;top:323px;width:25px;height:5px;overflow:hidden"><div class="t" style="left:0;top:-5.66px;width:25px;text-align:center;font-size:12px;line-height:12px;color:#222">5</div></div><div class="r" style="left:1px;top:346px;width:25px;height:1px;background:#c6c6c6;"></div><div class="r" style="left:1px;top:329px;width:25px;height:17px;overflow:hidden"><div class="t" style="left:0;top:0.54px;width:25px;text-align:center;font-size:12px;line-height:12px;color:#222">6</div></div><div class="r" style="left:1px;top:364px;width:25px;height:1px;background:#c6c6c6;"></div><div class="r" style="left:1px;top:347px;width:25px;height:17px;overflow:hidden"><div class="t" style="left:0;top:2.54px;width:25px;text-align:center;font-size:12px;line-height:12px;color:#222">7</div></div><div class="r" style="left:1px;top:382px;width:25px;height:1px;background:#c6c6c6;"></div><div class="r" style="left:1px;top:365px;width:25px;height:17px;overflow:hidden"><div class="t" style="left:0;top:3.34px;width:25px;text-align:center;font-size:12px;line-height:12px;color:#222">8</div></div><div class="r" style="left:1px;top:400px;width:25px;height:1px;background:#c6c6c6;"></div><div class="r" style="left:1px;top:383px;width:25px;height:17px;overflow:hidden"><div class="t" style="left:0;top:3.74px;width:25px;text-align:center;font-size:12px;line-height:12px;color:#222">9</div></div><div class="r" style="left:1px;top:418px;width:25px;height:1px;background:#c6c6c6;"></div><div class="r" style="left:1px;top:401px;width:25px;height:17px;overflow:hidden"><div class="t" style="left:0;top:3.84px;width:25px;text-align:center;font-size:12px;line-height:12px;color:#222">10</div></div><div class="r" style="left:1px;top:436px;width:25px;height:1px;background:#c6c6c6;"></div><div class="r" style="left:1px;top:419px;width:25px;height:17px;overflow:hidden"><div class="t" style="left:0;top:3.84px;width:25px;text-align:center;font-size:12px;line-height:12px;color:#222">11</div></div><div class="r" style="left:1px;top:454px;width:25px;height:1px;background:#c6c6c6;"></div><div class="r" style="left:1px;top:437px;width:25px;height:17px;overflow:hidden"><div class="t" style="left:0;top:3.84px;width:25px;text-align:center;font-size:12px;line-height:12px;color:#222">12</div></div><div class="r" style="left:1px;top:472px;width:25px;height:1px;background:#c6c6c6;"></div><div class="r" style="left:1px;top:455px;width:25px;height:17px;overflow:hidden"><div class="t" style="left:0;top:3.84px;width:25px;text-align:center;font-size:12px;line-height:12px;color:#222">13</div></div><div class="r" style="left:1px;top:490px;width:25px;height:1px;background:#c6c6c6;"></div><div class="r" style="left:1px;top:473px;width:25px;height:17px;overflow:hidden"><div class="t" style="left:0;top:3.84px;width:25px;text-align:center;font-size:12px;line-height:12px;color:#222">14</div></div><div class="r" style="left:1px;top:508px;width:25px;height:1px;background:#c6c6c6;"></div><div class="r" style="left:1px;top:491px;width:25px;height:17px;overflow:hidden"><div class="t" style="left:0;top:3.84px;width:25px;text-align:center;font-size:12px;line-height:12px;color:#222">15</div></div><div class="r" style="left:1px;top:526px;width:25px;height:1px;background:#c6c6c6;"></div><div class="r" style="left:1px;top:509px;width:25px;height:17px;overflow:hidden"><div class="t" style="left:0;top:3.84px;width:25px;text-align:center;font-size:12px;line-height:12px;color:#222">16</div></div><div class="r" style="left:1px;top:544px;width:25px;height:1px;background:#c6c6c6;"></div><div class="r" style="left:1px;top:527px;width:25px;height:17px;overflow:hidden"><div class="t" style="left:0;top:3.84px;width:25px;text-align:center;font-size:12px;line-height:12px;color:#222">17</div></div><div class="r" style="left:1px;top:562px;width:25px;height:1px;background:#c6c6c6;"></div><div class="r" style="left:1px;top:545px;width:25px;height:17px;overflow:hidden"><div class="t" style="left:0;top:3.34px;width:25px;text-align:center;font-size:12px;line-height:12px;color:#222">18</div></div><div class="r" style="left:1px;top:580px;width:25px;height:1px;background:#c6c6c6;"></div><div class="r" style="left:1px;top:563px;width:25px;height:17px;overflow:hidden"><div class="t" style="left:0;top:0.34px;width:25px;text-align:center;font-size:12px;line-height:12px;color:#222">19</div></div><div class="r" style="left:1px;top:598px;width:25px;height:1px;background:#c6c6c6;"></div><div class="r" style="left:1px;top:581px;width:25px;height:17px;overflow:hidden"><div class="t" style="left:0;top:2.04px;width:25px;text-align:center;font-size:12px;line-height:12px;color:#222">20</div></div><div class="r" style="left:1px;top:616px;width:25px;height:1px;background:#c6c6c6;"></div><div class="r" style="left:1px;top:599px;width:25px;height:17px;overflow:hidden"><div class="t" style="left:0;top:3.84px;width:25px;text-align:center;font-size:12px;line-height:12px;color:#222">21</div></div><div class="r" style="left:1px;top:634px;width:25px;height:1px;background:#c6c6c6;"></div><div class="r" style="left:1px;top:617px;width:25px;height:17px;overflow:hidden"><div class="t" style="left:0;top:3.84px;width:25px;text-align:center;font-size:12px;line-height:12px;color:#222">22</div></div><div class="r" style="left:1px;top:635px;width:25px;height:2px;overflow:hidden"><div class="t" style="left:0;top:3.84px;width:25px;text-align:center;font-size:12px;line-height:12px;color:#222">23</div></div><div class="r" style="left:27px;top:263px;width:1049px;height:374px;background:#fff;"></div><div class="r" style="left:1075px;top:263px;width:1px;height:374px;background:#c6c6c6;"></div><div class="r" style="left:27px;top:263px;width:1048px;height:374px;overflow:hidden"><div class="r" style="left:12px;top:18px;width:1040px;height:17px;background:#000;"></div><div class="t" style="top:23.54px;font-size:10px;line-height:10px;color:#fff;font-weight:bold;left:13.799999999999997px;">TTM Monthly Waterfalls</div><div class="t" style="top:46.53px;font-size:10px;line-height:10px;color:#000;font-weight:bold;left:13.799999999999997px;">Total</div><div class="r" style="left:11px;top:58px;width:1040px;height:3px;background:#000;"></div><div class="t" style="top:88.53px;font-size:10px;line-height:10px;color:#000;font-weight:bold;letter-spacing:-0.25px;left:13.799999999999997px;">(US$ in 000s)</div><div class="t" style="top:88.53px;font-size:10px;line-height:10px;color:#000;font-weight:bold;left:160.50px;width:60px;text-align:center;">May-18</div><div class="t" style="top:88.53px;font-size:10px;line-height:10px;color:#000;font-weight:bold;left:224.50px;width:60px;text-align:center;">Jun-18</div><div class="t" style="top:88.53px;font-size:10px;line-height:10px;color:#000;font-weight:bold;left:289.50px;width:60px;text-align:center;">Jul-18</div><div class="t" style="top:88.53px;font-size:10px;line-height:10px;color:#000;font-weight:bold;left:354.50px;width:60px;text-align:center;">Aug-18</div><div class="t" style="top:88.53px;font-size:10px;line-height:10px;color:#000;font-weight:bold;left:419.50px;width:60px;text-align:center;">Sep-18</div><div class="t" style="top:88.53px;font-size:10px;line-height:10px;color:#000;font-weight:bold;left:484.50px;width:60px;text-align:center;">Oct-18</div><div class="t" style="top:88.53px;font-size:10px;line-height:10px;color:#000;font-weight:bold;left:549.50px;width:60px;text-align:center;">Nov-18</div><div class="t" style="top:88.53px;font-size:10px;line-height:10px;color:#000;font-weight:bold;left:614.50px;width:60px;text-align:center;">Dec-18</div><div class="t" style="top:88.53px;font-size:10px;line-height:10px;color:#000;font-weight:bold;left:679.50px;width:60px;text-align:center;">Jan-19</div><div class="t" style="top:88.53px;font-size:10px;line-height:10px;color:#000;font-weight:bold;left:744.50px;width:60px;text-align:center;">Feb-19</div><div class="t" style="top:88.53px;font-size:10px;line-height:10px;color:#000;font-weight:bold;left:809.50px;width:60px;text-align:center;">Mar-19</div><div class="t" style="top:88.53px;font-size:10px;line-height:10px;color:#000;font-weight:bold;left:874.50px;width:60px;text-align:center;">Apr-19</div><div class="t" style="top:88.53px;font-size:10px;line-height:10px;color:#000;font-weight:bold;left:939.50px;width:60px;text-align:center;">May-19</div><div class="t" style="top:88.53px;font-size:10px;line-height:10px;color:#000;font-weight:bold;left:1004.50px;width:60px;text-align:center;">Jun-19</div><div class="r" style="left:11px;top:100px;width:1040px;height:3px;background:#000;"></div><div class="t" style="top:322.54px;font-size:10px;line-height:10px;color:#000;font-weight:bold;letter-spacing:-0.25px;left:13.799999999999997px;">(US$ in 000s)</div><div class="t" style="top:322.54px;font-size:10px;line-height:10px;color:#000;font-weight:bold;left:160.50px;width:60px;text-align:center;">May-18</div><div class="t" style="top:322.54px;font-size:10px;line-height:10px;color:#000;font-weight:bold;left:224.50px;width:60px;text-align:center;">Jun-18</div><div class="t" style="top:322.54px;font-size:10px;line-height:10px;color:#000;font-weight:bold;left:289.50px;width:60px;text-align:center;">Jul-18</div><div class="t" style="top:322.54px;font-size:10px;line-height:10px;color:#000;font-weight:bold;left:354.50px;width:60px;text-align:center;">Aug-18</div><div class="t" style="top:322.54px;font-size:10px;line-height:10px;color:#000;font-weight:bold;left:419.50px;width:60px;text-align:center;">Sep-18</div><div class="t" style="top:322.54px;font-size:10px;line-height:10px;color:#000;font-weight:bold;left:484.50px;width:60px;text-align:center;">Oct-18</div><div class="t" style="top:322.54px;font-size:10px;line-height:10px;color:#000;font-weight:bold;left:549.50px;width:60px;text-align:center;">Nov-18</div><div class="t" style="top:322.54px;font-size:10px;line-height:10px;color:#000;font-weight:bold;left:614.50px;width:60px;text-align:center;">Dec-18</div><div class="t" style="top:322.54px;font-size:10px;line-height:10px;color:#000;font-weight:bold;left:679.50px;width:60px;text-align:center;">Jan-19</div><div class="t" style="top:322.54px;font-size:10px;line-height:10px;color:#000;font-weight:bold;left:744.50px;width:60px;text-align:center;">Feb-19</div><div class="t" style="top:322.54px;font-size:10px;line-height:10px;color:#000;font-weight:bold;left:809.50px;width:60px;text-align:center;">Mar-19</div><div class="t" style="top:322.54px;font-size:10px;line-height:10px;color:#000;font-weight:bold;left:874.50px;width:60px;text-align:center;">Apr-19</div><div class="t" style="top:322.54px;font-size:10px;line-height:10px;color:#000;font-weight:bold;left:939.50px;width:60px;text-align:center;">May-19</div><div class="t" style="top:322.54px;font-size:10px;line-height:10px;color:#000;font-weight:bold;left:1004.50px;width:60px;text-align:center;">Jun-19</div><div class="r" style="left:11px;top:334px;width:1040px;height:3px;background:#000;"></div><div class="t" style="top:108.34px;font-size:10px;line-height:10px;color:#000;font-weight:bold;letter-spacing:-0.4px;left:13.799999999999997px;">Beginning ARR</div><div class="t" style="top:108.34px;font-size:10px;line-height:10px;color:#008000;font-weight:bold;letter-spacing:0.25px;left:151.25px;width:64px;text-align:right;">$603</div><div class="t" style="top:108.34px;font-size:10px;line-height:10px;color:#008000;font-weight:bold;letter-spacing:0.25px;left:216.25px;width:64px;text-align:right;">$712</div><div class="t" style="top:108.34px;font-size:10px;line-height:10px;color:#008000;font-weight:bold;letter-spacing:0.25px;left:281.25px;width:64px;text-align:right;">$880</div><div class="t" style="top:108.34px;font-size:10px;line-height:10px;color:#008000;font-weight:bold;letter-spacing:0.25px;left:346.25px;width:64px;text-align:right;">$960</div><div class="t" style="top:108.34px;font-size:10px;line-height:10px;color:#008000;font-weight:bold;letter-spacing:0.25px;left:411.25px;width:64px;text-align:right;">$1,135</div><div class="t" style="top:108.34px;font-size:10px;line-height:10px;color:#008000;font-weight:bold;letter-spacing:0.25px;left:476.25px;width:64px;text-align:right;">$1,231</div><div class="t" style="top:108.34px;font-size:10px;line-height:10px;color:#008000;font-weight:bold;letter-spacing:0.25px;left:541.25px;width:64px;text-align:right;">$1,340</div><div class="t" style="top:108.34px;font-size:10px;line-height:10px;color:#008000;font-weight:bold;letter-spacing:0.25px;left:606.25px;width:64px;text-align:right;">$1,595</div><div class="t" style="top:108.34px;font-size:10px;line-height:10px;color:#008000;font-weight:bold;letter-spacing:0.25px;left:671.25px;width:64px;text-align:right;">$1,671</div><div class="t" style="top:108.34px;font-size:10px;line-height:10px;color:#008000;font-weight:bold;letter-spacing:0.25px;left:736.25px;width:64px;text-align:right;">$1,724</div><div class="t" style="top:108.34px;font-size:10px;line-height:10px;color:#008000;font-weight:bold;letter-spacing:0.25px;left:801.25px;width:64px;text-align:right;">$1,959</div><div class="t" style="top:108.34px;font-size:10px;line-height:10px;color:#008000;font-weight:bold;letter-spacing:0.25px;left:866.25px;width:64px;text-align:right;">$1,982</div><div class="t" style="top:108.34px;font-size:10px;line-height:10px;color:#008000;font-weight:bold;letter-spacing:0.25px;left:931.25px;width:64px;text-align:right;">$2,023</div><div class="t" style="top:108.34px;font-size:10px;line-height:10px;color:#008000;font-weight:bold;letter-spacing:0.25px;left:996.25px;width:64px;text-align:right;">$1,995</div><div class="t" style="top:126.34px;font-size:10px;line-height:10px;color:#000;letter-spacing:-0.05px;left:13.799999999999997px;">TTM New</div><div class="t" style="top:126.34px;font-size:10px;line-height:10px;color:#008000;letter-spacing:0.25px;left:151.25px;width:64px;text-align:right;">$1,418</div><div class="t" style="top:126.34px;font-size:10px;line-height:10px;color:#008000;letter-spacing:0.25px;left:216.25px;width:64px;text-align:right;">$1,314</div><div class="t" style="top:126.34px;font-size:10px;line-height:10px;color:#008000;letter-spacing:0.25px;left:281.25px;width:64px;text-align:right;">$1,457</div><div class="t" style="top:126.34px;font-size:10px;line-height:10px;color:#008000;letter-spacing:0.25px;left:346.25px;width:64px;text-align:right;">$1,349</div><div class="t" style="top:126.34px;font-size:10px;line-height:10px;color:#008000;letter-spacing:0.25px;left:411.25px;width:64px;text-align:right;">$1,279</div><div class="t" style="top:126.34px;font-size:10px;line-height:10px;color:#008000;letter-spacing:0.25px;left:476.25px;width:64px;text-align:right;">$1,285</div><div class="t" style="top:126.34px;font-size:10px;line-height:10px;color:#008000;letter-spacing:0.25px;left:541.25px;width:64px;text-align:right;">$1,295</div><div class="t" style="top:126.34px;font-size:10px;line-height:10px;color:#008000;letter-spacing:0.25px;left:606.25px;width:64px;text-align:right;">$1,229</div><div class="t" style="top:126.34px;font-size:10px;line-height:10px;color:#008000;letter-spacing:0.25px;left:671.25px;width:64px;text-align:right;">$1,241</div><div class="t" style="top:126.34px;font-size:10px;line-height:10px;color:#008000;letter-spacing:0.25px;left:736.25px;width:64px;text-align:right;">$1,306</div><div class="t" style="top:126.34px;font-size:10px;line-height:10px;color:#008000;letter-spacing:0.25px;left:801.25px;width:64px;text-align:right;">$1,127</div><div class="t" style="top:126.34px;font-size:10px;line-height:10px;color:#008000;letter-spacing:0.25px;left:866.25px;width:64px;text-align:right;">$1,427</div><div class="t" style="top:126.34px;font-size:10px;line-height:10px;color:#008000;letter-spacing:0.25px;left:931.25px;width:64px;text-align:right;">$1,515</div><div class="t" style="top:126.34px;font-size:10px;line-height:10px;color:#008000;letter-spacing:0.25px;left:996.25px;width:64px;text-align:right;">$1,634</div><div class="t" style="top:144.34px;font-size:10px;line-height:10px;color:#000;letter-spacing:-0.05px;left:13.799999999999997px;">TTM Upsell</div><div class="t" style="top:144.34px;font-size:10px;line-height:10px;color:#008000;letter-spacing:0.25px;left:151.25px;width:64px;text-align:right;">$167</div><div class="t" style="top:144.34px;font-size:10px;line-height:10px;color:#008000;letter-spacing:0.25px;left:216.25px;width:64px;text-align:right;">$174</div><div class="t" style="top:144.34px;font-size:10px;line-height:10px;color:#008000;letter-spacing:0.25px;left:281.25px;width:64px;text-align:right;">$181</div><div class="t" style="top:144.34px;font-size:10px;line-height:10px;color:#008000;letter-spacing:0.25px;left:346.25px;width:64px;text-align:right;">$149</div><div class="t" style="top:144.34px;font-size:10px;line-height:10px;color:#008000;letter-spacing:0.25px;left:411.25px;width:64px;text-align:right;">$173</div><div class="t" style="top:144.34px;font-size:10px;line-height:10px;color:#008000;letter-spacing:0.25px;left:476.25px;width:64px;text-align:right;">$181</div><div class="t" style="top:144.34px;font-size:10px;line-height:10px;color:#008000;letter-spacing:0.25px;left:541.25px;width:64px;text-align:right;">$241</div><div class="t" style="top:144.34px;font-size:10px;line-height:10px;color:#008000;letter-spacing:0.25px;left:606.25px;width:64px;text-align:right;">$267</div><div class="t" style="top:144.34px;font-size:10px;line-height:10px;color:#008000;letter-spacing:0.25px;left:671.25px;width:64px;text-align:right;">$248</div><div class="t" style="top:144.34px;font-size:10px;line-height:10px;color:#008000;letter-spacing:0.25px;left:736.25px;width:64px;text-align:right;">$209</div><div class="t" style="top:144.34px;font-size:10px;line-height:10px;color:#008000;letter-spacing:0.25px;left:801.25px;width:64px;text-align:right;">$208</div><div class="t" style="top:144.34px;font-size:10px;line-height:10px;color:#008000;letter-spacing:0.25px;left:866.25px;width:64px;text-align:right;">$258</div><div class="t" style="top:144.34px;font-size:10px;line-height:10px;color:#008000;letter-spacing:0.25px;left:931.25px;width:64px;text-align:right;">$287</div><div class="t" style="top:144.34px;font-size:10px;line-height:10px;color:#008000;letter-spacing:0.25px;left:996.25px;width:64px;text-align:right;">$236</div><div class="t" style="top:162.34px;font-size:10px;line-height:10px;color:#000;letter-spacing:-0.05px;left:13.799999999999997px;">TTM Downsell</div><div class="t" style="top:162.34px;font-size:10px;line-height:10px;color:#008000;letter-spacing:0.25px;left:155.25px;width:64px;text-align:right;">($26)</div><div class="t" style="top:162.34px;font-size:10px;line-height:10px;color:#008000;letter-spacing:0.25px;left:220.25px;width:64px;text-align:right;">($35)</div><div class="t" style="top:162.34px;font-size:10px;line-height:10px;color:#008000;letter-spacing:0.25px;left:285.25px;width:64px;text-align:right;">($83)</div><div class="t" style="top:162.34px;font-size:10px;line-height:10px;color:#008000;letter-spacing:0.25px;left:350.25px;width:64px;text-align:right;">($72)</div><div class="t" style="top:162.34px;font-size:10px;line-height:10px;color:#008000;letter-spacing:0.25px;left:415.25px;width:64px;text-align:right;">($64)</div><div class="t" style="top:162.34px;font-size:10px;line-height:10px;color:#008000;letter-spacing:0.25px;left:480.25px;width:64px;text-align:right;">($71)</div><div class="t" style="top:162.34px;font-size:10px;line-height:10px;color:#008000;letter-spacing:0.25px;left:545.25px;width:64px;text-align:right;">($66)</div><div class="t" style="top:162.34px;font-size:10px;line-height:10px;color:#008000;letter-spacing:0.25px;left:610.25px;width:64px;text-align:right;">($150)</div><div class="t" style="top:162.34px;font-size:10px;line-height:10px;color:#008000;letter-spacing:0.25px;left:675.25px;width:64px;text-align:right;">($142)</div><div class="t" style="top:162.34px;font-size:10px;line-height:10px;color:#008000;letter-spacing:0.25px;left:740.25px;width:64px;text-align:right;">($147)</div><div class="t" style="top:162.34px;font-size:10px;line-height:10px;color:#008000;letter-spacing:0.25px;left:805.25px;width:64px;text-align:right;">($277)</div><div class="t" style="top:162.34px;font-size:10px;line-height:10px;color:#008000;letter-spacing:0.25px;left:870.25px;width:64px;text-align:right;">($282)</div><div class="t" style="top:162.34px;font-size:10px;line-height:10px;color:#008000;letter-spacing:0.25px;left:935.25px;width:64px;text-align:right;">($277)</div><div class="t" style="top:162.34px;font-size:10px;line-height:10px;color:#008000;letter-spacing:0.25px;left:1000.25px;width:64px;text-align:right;">($244)</div><div class="t" style="top:180.34px;font-size:10px;line-height:10px;color:#000;letter-spacing:-0.05px;left:13.799999999999997px;">TTM Churn</div><div class="t" style="top:180.34px;font-size:10px;line-height:10px;color:#008000;letter-spacing:0.25px;left:155.25px;width:64px;text-align:right;">($139)</div><div class="t" style="top:180.34px;font-size:10px;line-height:10px;color:#008000;letter-spacing:0.25px;left:220.25px;width:64px;text-align:right;">($170)</div><div class="t" style="top:180.34px;font-size:10px;line-height:10px;color:#008000;letter-spacing:0.25px;left:285.25px;width:64px;text-align:right;">($167)</div><div class="t" style="top:180.34px;font-size:10px;line-height:10px;color:#008000;letter-spacing:0.25px;left:350.25px;width:64px;text-align:right;">($202)</div><div class="t" style="top:180.34px;font-size:10px;line-height:10px;color:#008000;letter-spacing:0.25px;left:415.25px;width:64px;text-align:right;">($240)</div><div class="t" style="top:180.34px;font-size:10px;line-height:10px;color:#008000;letter-spacing:0.25px;left:480.25px;width:64px;text-align:right;">($244)</div><div class="t" style="top:180.34px;font-size:10px;line-height:10px;color:#008000;letter-spacing:0.25px;left:545.25px;width:64px;text-align:right;">($268)</div><div class="t" style="top:180.34px;font-size:10px;line-height:10px;color:#008000;letter-spacing:0.25px;left:610.25px;width:64px;text-align:right;">($285)</div><div class="t" style="top:180.34px;font-size:10px;line-height:10px;color:#008000;letter-spacing:0.25px;left:675.25px;width:64px;text-align:right;">($305)</div><div class="t" style="top:180.34px;font-size:10px;line-height:10px;color:#008000;letter-spacing:0.25px;left:740.25px;width:64px;text-align:right;">($307)</div><div class="t" style="top:180.34px;font-size:10px;line-height:10px;color:#008000;letter-spacing:0.25px;left:805.25px;width:64px;text-align:right;">($309)</div><div class="t" style="top:180.34px;font-size:10px;line-height:10px;color:#008000;letter-spacing:0.25px;left:870.25px;width:64px;text-align:right;">($327)</div><div class="t" style="top:180.34px;font-size:10px;line-height:10px;color:#008000;letter-spacing:0.25px;left:935.25px;width:64px;text-align:right;">($346)</div><div class="t" style="top:180.34px;font-size:10px;line-height:10px;color:#008000;letter-spacing:0.25px;left:1000.25px;width:64px;text-align:right;">($312)</div><div class="t" style="top:198.34px;font-size:10px;line-height:10px;color:#000;font-weight:bold;letter-spacing:-0.4px;left:13.799999999999997px;">Ending ARR</div><div class="t" style="top:198.34px;font-size:10px;line-height:10px;color:#000;font-weight:bold;letter-spacing:0.25px;left:151.25px;width:64px;text-align:right;">$2,023</div><div class="t" style="top:198.34px;font-size:10px;line-height:10px;color:#000;font-weight:bold;letter-spacing:0.25px;left:216.25px;width:64px;text-align:right;">$1,995</div><div class="t" style="top:198.34px;font-size:10px;line-height:10px;color:#000;font-weight:bold;letter-spacing:0.25px;left:281.25px;width:64px;text-align:right;">$2,268</div><div class="t" style="top:198.34px;font-size:10px;line-height:10px;color:#000;font-weight:bold;letter-spacing:0.25px;left:346.25px;width:64px;text-align:right;">$2,184</div><div class="t" style="top:198.34px;font-size:10px;line-height:10px;color:#000;font-weight:bold;letter-spacing:0.25px;left:411.25px;width:64px;text-align:right;">$2,284</div><div class="t" style="top:198.34px;font-size:10px;line-height:10px;color:#000;font-weight:bold;letter-spacing:0.25px;left:476.25px;width:64px;text-align:right;">$2,381</div><div class="t" style="top:198.34px;font-size:10px;line-height:10px;color:#000;font-weight:bold;letter-spacing:0.25px;left:541.25px;width:64px;text-align:right;">$2,543</div><div class="t" style="top:198.34px;font-size:10px;line-height:10px;color:#000;font-weight:bold;letter-spacing:0.25px;left:606.25px;width:64px;text-align:right;">$2,655</div><div class="t" style="top:198.34px;font-size:10px;line-height:10px;color:#000;font-weight:bold;letter-spacing:0.25px;left:671.25px;width:64px;text-align:right;">$2,712</div><div class="t" style="top:198.34px;font-size:10px;line-height:10px;color:#000;font-weight:bold;letter-spacing:0.25px;left:736.25px;width:64px;text-align:right;">$2,786</div><div class="t" style="top:198.34px;font-size:10px;line-height:10px;color:#000;font-weight:bold;letter-spacing:0.25px;left:801.25px;width:64px;text-align:right;">$2,707</div><div class="t" style="top:198.34px;font-size:10px;line-height:10px;color:#000;font-weight:bold;letter-spacing:0.25px;left:866.25px;width:64px;text-align:right;">$3,059</div><div class="t" style="top:198.34px;font-size:10px;line-height:10px;color:#000;font-weight:bold;letter-spacing:0.25px;left:931.25px;width:64px;text-align:right;">$3,202</div><div class="t" style="top:198.34px;font-size:10px;line-height:10px;color:#000;font-weight:bold;letter-spacing:0.25px;left:996.25px;width:64px;text-align:right;">$3,309</div><div class="t" style="top:216.34px;font-size:10px;line-height:10px;color:#000;font-style:italic;letter-spacing:-0.05px;left:13.799999999999997px;">Check</div><div class="t" style="top:216.34px;font-size:10px;line-height:10px;color:#000;font-style:italic;letter-spacing:0.25px;left:151.25px;width:64px;text-align:right;">-</div><div class="t" style="top:216.34px;font-size:10px;line-height:10px;color:#000;font-style:italic;letter-spacing:0.25px;left:216.25px;width:64px;text-align:right;">-</div><div class="t" style="top:216.34px;font-size:10px;line-height:10px;color:#000;font-style:italic;letter-spacing:0.25px;left:281.25px;width:64px;text-align:right;">-</div><div class="t" style="top:216.34px;font-size:10px;line-height:10px;color:#000;font-style:italic;letter-spacing:0.25px;left:346.25px;width:64px;text-align:right;">-</div><div class="t" style="top:216.34px;font-size:10px;line-height:10px;color:#000;font-style:italic;letter-spacing:0.25px;left:411.25px;width:64px;text-align:right;">-</div><div class="t" style="top:216.34px;font-size:10px;line-height:10px;color:#000;font-style:italic;letter-spacing:0.25px;left:476.25px;width:64px;text-align:right;">-</div><div class="t" style="top:216.34px;font-size:10px;line-height:10px;color:#000;font-style:italic;letter-spacing:0.25px;left:541.25px;width:64px;text-align:right;">-</div><div class="t" style="top:216.34px;font-size:10px;line-height:10px;color:#000;font-style:italic;letter-spacing:0.25px;left:606.25px;width:64px;text-align:right;">-</div><div class="t" style="top:216.34px;font-size:10px;line-height:10px;color:#000;font-style:italic;letter-spacing:0.25px;left:671.25px;width:64px;text-align:right;">-</div><div class="t" style="top:216.34px;font-size:10px;line-height:10px;color:#000;font-style:italic;letter-spacing:0.25px;left:736.25px;width:64px;text-align:right;">-</div><div class="t" style="top:216.34px;font-size:10px;line-height:10px;color:#000;font-style:italic;letter-spacing:0.25px;left:801.25px;width:64px;text-align:right;">-</div><div class="t" style="top:216.34px;font-size:10px;line-height:10px;color:#000;font-style:italic;letter-spacing:0.25px;left:866.25px;width:64px;text-align:right;">-</div><div class="t" style="top:216.34px;font-size:10px;line-height:10px;color:#000;font-style:italic;letter-spacing:0.25px;left:931.25px;width:64px;text-align:right;">-</div><div class="t" style="top:216.34px;font-size:10px;line-height:10px;color:#000;font-style:italic;letter-spacing:0.25px;left:996.25px;width:64px;text-align:right;">-</div><div class="t" style="top:234.34px;font-size:10px;line-height:10px;color:#000;font-style:italic;letter-spacing:-0.05px;left:13.799999999999997px;">Gross $ Retention</div><div class="t" style="top:234.34px;font-size:10px;line-height:10px;color:#000;font-style:italic;letter-spacing:0.25px;left:151.25px;width:64px;text-align:right;">73%</div><div class="t" style="top:234.34px;font-size:10px;line-height:10px;color:#000;font-style:italic;letter-spacing:0.25px;left:216.25px;width:64px;text-align:right;">71%</div><div class="t" style="top:234.34px;font-size:10px;line-height:10px;color:#000;font-style:italic;letter-spacing:0.25px;left:281.25px;width:64px;text-align:right;">72%</div><div class="t" style="top:234.34px;font-size:10px;line-height:10px;color:#000;font-style:italic;letter-spacing:0.25px;left:346.25px;width:64px;text-align:right;">71%</div><div class="t" style="top:234.34px;font-size:10px;line-height:10px;color:#000;font-style:italic;letter-spacing:0.25px;left:411.25px;width:64px;text-align:right;">73%</div><div class="t" style="top:234.34px;font-size:10px;line-height:10px;color:#000;font-style:italic;letter-spacing:0.25px;left:476.25px;width:64px;text-align:right;">74%</div><div class="t" style="top:234.34px;font-size:10px;line-height:10px;color:#000;font-style:italic;letter-spacing:0.25px;left:541.25px;width:64px;text-align:right;">75%</div><div class="t" style="top:234.34px;font-size:10px;line-height:10px;color:#000;font-style:italic;letter-spacing:0.25px;left:606.25px;width:64px;text-align:right;">73%</div><div class="t" style="top:234.34px;font-size:10px;line-height:10px;color:#000;font-style:italic;letter-spacing:0.25px;left:671.25px;width:64px;text-align:right;">73%</div><div class="t" style="top:234.34px;font-size:10px;line-height:10px;color:#000;font-style:italic;letter-spacing:0.25px;left:736.25px;width:64px;text-align:right;">74%</div><div class="t" style="top:234.34px;font-size:10px;line-height:10px;color:#000;font-style:italic;letter-spacing:0.25px;left:801.25px;width:64px;text-align:right;">70%</div><div class="t" style="top:234.34px;font-size:10px;line-height:10px;color:#000;font-style:italic;letter-spacing:0.25px;left:866.25px;width:64px;text-align:right;">69%</div><div class="t" style="top:234.34px;font-size:10px;line-height:10px;color:#000;font-style:italic;letter-spacing:0.25px;left:931.25px;width:64px;text-align:right;">69%</div><div class="t" style="top:234.34px;font-size:10px;line-height:10px;color:#000;font-style:italic;letter-spacing:0.25px;left:996.25px;width:64px;text-align:right;">72%</div><div class="t" style="top:252.33px;font-size:10px;line-height:10px;color:#000;font-style:italic;letter-spacing:-0.05px;left:13.799999999999997px;">Net $ Retention</div><div class="t" style="top:252.33px;font-size:10px;line-height:10px;color:#000;font-style:italic;letter-spacing:0.25px;left:151.25px;width:64px;text-align:right;">100%</div><div class="t" style="top:252.33px;font-size:10px;line-height:10px;color:#000;font-style:italic;letter-spacing:0.25px;left:216.25px;width:64px;text-align:right;">96%</div><div class="t" style="top:252.33px;font-size:10px;line-height:10px;color:#000;font-style:italic;letter-spacing:0.25px;left:281.25px;width:64px;text-align:right;">92%</div><div class="t" style="top:252.33px;font-size:10px;line-height:10px;color:#000;font-style:italic;letter-spacing:0.25px;left:346.25px;width:64px;text-align:right;">87%</div><div class="t" style="top:252.33px;font-size:10px;line-height:10px;color:#000;font-style:italic;letter-spacing:0.25px;left:411.25px;width:64px;text-align:right;">88%</div><div class="t" style="top:252.33px;font-size:10px;line-height:10px;color:#000;font-style:italic;letter-spacing:0.25px;left:476.25px;width:64px;text-align:right;">89%</div><div class="t" style="top:252.33px;font-size:10px;line-height:10px;color:#000;font-style:italic;letter-spacing:0.25px;left:541.25px;width:64px;text-align:right;">93%</div><div class="t" style="top:252.33px;font-size:10px;line-height:10px;color:#000;font-style:italic;letter-spacing:0.25px;left:606.25px;width:64px;text-align:right;">89%</div><div class="t" style="top:252.33px;font-size:10px;line-height:10px;color:#000;font-style:italic;letter-spacing:0.25px;left:671.25px;width:64px;text-align:right;">88%</div><div class="t" style="top:252.33px;font-size:10px;line-height:10px;color:#000;font-style:italic;letter-spacing:0.25px;left:736.25px;width:64px;text-align:right;">86%</div><div class="t" style="top:252.33px;font-size:10px;line-height:10px;color:#000;font-style:italic;letter-spacing:0.25px;left:801.25px;width:64px;text-align:right;">81%</div><div class="t" style="top:252.33px;font-size:10px;line-height:10px;color:#000;font-style:italic;letter-spacing:0.25px;left:866.25px;width:64px;text-align:right;">82%</div><div class="t" style="top:252.33px;font-size:10px;line-height:10px;color:#000;font-style:italic;letter-spacing:0.25px;left:931.25px;width:64px;text-align:right;">83%</div><div class="t" style="top:252.33px;font-size:10px;line-height:10px;color:#000;font-style:italic;letter-spacing:0.25px;left:996.25px;width:64px;text-align:right;">84%</div><div class="t" style="top:270.33px;font-size:10px;line-height:10px;color:#000;font-style:italic;letter-spacing:-0.05px;left:13.799999999999997px;">LTM Change</div><div class="t" style="top:270.33px;font-size:10px;line-height:10px;color:#000;font-style:italic;letter-spacing:0.25px;left:151.25px;width:64px;text-align:right;">$1,420</div><div class="t" style="top:270.33px;font-size:10px;line-height:10px;color:#000;font-style:italic;letter-spacing:0.25px;left:216.25px;width:64px;text-align:right;">$1,284</div><div class="t" style="top:270.33px;font-size:10px;line-height:10px;color:#000;font-style:italic;letter-spacing:0.25px;left:281.25px;width:64px;text-align:right;">$1,389</div><div class="t" style="top:270.33px;font-size:10px;line-height:10px;color:#000;font-style:italic;letter-spacing:0.25px;left:346.25px;width:64px;text-align:right;">$1,224</div><div class="t" style="top:270.33px;font-size:10px;line-height:10px;color:#000;font-style:italic;letter-spacing:0.25px;left:411.25px;width:64px;text-align:right;">$1,148</div><div class="t" style="top:270.33px;font-size:10px;line-height:10px;color:#000;font-style:italic;letter-spacing:0.25px;left:476.25px;width:64px;text-align:right;">$1,150</div><div class="t" style="top:270.33px;font-size:10px;line-height:10px;color:#000;font-style:italic;letter-spacing:0.25px;left:541.25px;width:64px;text-align:right;">$1,202</div><div class="t" style="top:270.33px;font-size:10px;line-height:10px;color:#000;font-style:italic;letter-spacing:0.25px;left:606.25px;width:64px;text-align:right;">$1,061</div><div class="t" style="top:270.33px;font-size:10px;line-height:10px;color:#000;font-style:italic;letter-spacing:0.25px;left:671.25px;width:64px;text-align:right;">$1,042</div><div class="t" style="top:270.33px;font-size:10px;line-height:10px;color:#000;font-style:italic;letter-spacing:0.25px;left:736.25px;width:64px;text-align:right;">$1,062</div><div class="t" style="top:270.33px;font-size:10px;line-height:10px;color:#000;font-style:italic;letter-spacing:0.25px;left:801.25px;width:64px;text-align:right;">$748</div><div class="t" style="top:270.33px;font-size:10px;line-height:10px;color:#000;font-style:italic;letter-spacing:0.25px;left:866.25px;width:64px;text-align:right;">$1,077</div><div class="t" style="top:270.33px;font-size:10px;line-height:10px;color:#000;font-style:italic;letter-spacing:0.25px;left:931.25px;width:64px;text-align:right;">$1,179</div><div class="t" style="top:270.33px;font-size:10px;line-height:10px;color:#000;font-style:italic;letter-spacing:0.25px;left:996.25px;width:64px;text-align:right;">$1,314</div><div class="t" style="top:342.33px;font-size:10px;line-height:10px;color:#000;font-weight:bold;letter-spacing:-0.4px;left:13.799999999999997px;">Beginning Logo Count</div><div class="t" style="top:342.33px;font-size:10px;line-height:10px;color:#008000;font-weight:bold;letter-spacing:0.25px;left:151.25px;width:64px;text-align:right;">279</div><div class="t" style="top:342.33px;font-size:10px;line-height:10px;color:#008000;font-weight:bold;letter-spacing:0.25px;left:216.25px;width:64px;text-align:right;">331</div><div class="t" style="top:342.33px;font-size:10px;line-height:10px;color:#008000;font-weight:bold;letter-spacing:0.25px;left:281.25px;width:64px;text-align:right;">379</div><div class="t" style="top:342.33px;font-size:10px;line-height:10px;color:#008000;font-weight:bold;letter-spacing:0.25px;left:346.25px;width:64px;text-align:right;">436</div><div class="t" style="top:342.33px;font-size:10px;line-height:10px;color:#008000;font-weight:bold;letter-spacing:0.25px;left:411.25px;width:64px;text-align:right;">481</div><div class="t" style="top:342.33px;font-size:10px;line-height:10px;color:#008000;font-weight:bold;letter-spacing:0.25px;left:476.25px;width:64px;text-align:right;">520</div><div class="t" style="top:342.33px;font-size:10px;line-height:10px;color:#008000;font-weight:bold;letter-spacing:0.25px;left:541.25px;width:64px;text-align:right;">560</div><div class="t" style="top:342.33px;font-size:10px;line-height:10px;color:#008000;font-weight:bold;letter-spacing:0.25px;left:606.25px;width:64px;text-align:right;">599</div><div class="t" style="top:342.33px;font-size:10px;line-height:10px;color:#008000;font-weight:bold;letter-spacing:0.25px;left:671.25px;width:64px;text-align:right;">609</div><div class="t" style="top:342.33px;font-size:10px;line-height:10px;color:#008000;font-weight:bold;letter-spacing:0.25px;left:736.25px;width:64px;text-align:right;">620</div><div class="t" style="top:342.33px;font-size:10px;line-height:10px;color:#008000;font-weight:bold;letter-spacing:0.25px;left:801.25px;width:64px;text-align:right;">628</div><div class="t" style="top:342.33px;font-size:10px;line-height:10px;color:#008000;font-weight:bold;letter-spacing:0.25px;left:866.25px;width:64px;text-align:right;">642</div><div class="t" style="top:342.33px;font-size:10px;line-height:10px;color:#008000;font-weight:bold;letter-spacing:0.25px;left:931.25px;width:64px;text-align:right;">654</div><div class="t" style="top:342.33px;font-size:10px;line-height:10px;color:#008000;font-weight:bold;letter-spacing:0.25px;left:996.25px;width:64px;text-align:right;">660</div><div class="t" style="top:360.33px;font-size:10px;line-height:10px;color:#000;letter-spacing:-0.05px;left:13.799999999999997px;">TTM New Logos</div><div class="t" style="top:360.33px;font-size:10px;line-height:10px;color:#008000;letter-spacing:0.25px;left:151.25px;width:64px;text-align:right;">499</div><div class="t" style="top:360.33px;font-size:10px;line-height:10px;color:#008000;letter-spacing:0.25px;left:216.25px;width:64px;text-align:right;">444</div><div class="t" style="top:360.33px;font-size:10px;line-height:10px;color:#008000;letter-spacing:0.25px;left:281.25px;width:64px;text-align:right;">469</div><div class="t" style="top:360.33px;font-size:10px;line-height:10px;color:#008000;letter-spacing:0.25px;left:346.25px;width:64px;text-align:right;">453</div><div class="t" style="top:360.33px;font-size:10px;line-height:10px;color:#008000;letter-spacing:0.25px;left:411.25px;width:64px;text-align:right;">433</div><div class="t" style="top:360.33px;font-size:10px;line-height:10px;color:#008000;letter-spacing:0.25px;left:476.25px;width:64px;text-align:right;">424</div><div class="t" style="top:360.33px;font-size:10px;line-height:10px;color:#008000;letter-spacing:0.25px;left:541.25px;width:64px;text-align:right;">430</div><div class="t" style="top:360.33px;font-size:10px;line-height:10px;color:#008000;letter-spacing:0.25px;left:606.25px;width:64px;text-align:right;">429</div><div class="t" style="top:360.33px;font-size:10px;line-height:10px;color:#008000;letter-spacing:0.25px;left:671.25px;width:64px;text-align:right;">432</div><div class="t" style="top:360.33px;font-size:10px;line-height:10px;color:#008000;letter-spacing:0.25px;left:736.25px;width:64px;text-align:right;">439</div><div class="t" style="top:360.33px;font-size:10px;line-height:10px;color:#008000;letter-spacing:0.25px;left:801.25px;width:64px;text-align:right;">451</div><div class="t" style="top:360.33px;font-size:10px;line-height:10px;color:#008000;letter-spacing:0.25px;left:866.25px;width:64px;text-align:right;">468</div><div class="t" style="top:360.33px;font-size:10px;line-height:10px;color:#008000;letter-spacing:0.25px;left:931.25px;width:64px;text-align:right;">473</div><div class="t" style="top:360.33px;font-size:10px;line-height:10px;color:#008000;letter-spacing:0.25px;left:996.25px;width:64px;text-align:right;">512</div><div class="r" style="left:11px;top:191px;width:1040px;height:1px;background:#000;"></div></div><div class="r" style="left:25px;top:261px;width:15px;height:21px;border:2px solid #217346;box-sizing:border-box;"></div><div class="r" style="left:35px;top:277px;width:7px;height:7px;background:#fff;"></div><div class="r" style="left:36px;top:278px;width:5px;height:5px;background:#217346;"></div><div class="r" style="left:1076px;top:206px;width:21px;height:431px;background:#e6e6e6;"></div><div class="r" style="left:1079px;top:206px;width:15px;height:15px;background:#fff;border:1px solid #ababab;box-sizing:border-box;"></div><svg class="r" style="left:1082px;top:211px;overflow:visible" width="9" height="5" viewBox="0 0 9 5"><path d="M0 5 L4.5 0 L9 5 Z" fill="#333"/></svg><div class="r" style="left:1079px;top:221px;width:15px;height:157px;background:#fff;border:1px solid #ababab;box-sizing:border-box;"></div><div class="r" style="left:1079px;top:623px;width:15px;height:15px;background:#fff;border:1px solid #ababab;box-sizing:border-box;"></div><svg class="r" style="left:1082px;top:628px;overflow:visible" width="9" height="5" viewBox="0 0 9 5"><path d="M0 0 L4.5 5 L9 0 Z" fill="#333"/></svg><div class="r" style="left:1097px;top:65px;width:1px;height:623px;background:#217346;"></div><div class="r" style="left:0px;top:65px;width:1px;height:623px;background:#217346;"></div><div class="r" style="left:1px;top:637px;width:1096px;height:1px;background:#ababab;"></div><div class="r" style="left:1px;top:638px;width:1096px;height:27px;background:#e6e6e6;"></div><svg class="r" style="left:27px;top:647px;overflow:visible" width="5" height="8" viewBox="0 0 5 8"><path d="M5 0 L0 4 L5 8 Z" fill="#1e6b41"/></svg><svg class="r" style="left:57px;top:647px;overflow:visible" width="5" height="8" viewBox="0 0 5 8"><path d="M0 0 L5 4 L0 8 Z" fill="#b8b8b8"/></svg><div class="r" style="left:82px;top:653px;width:2px;height:2px;background:#1e6b41;"></div><div class="r" style="left:86px;top:653px;width:2px;height:2px;background:#1e6b41;"></div><div class="r" style="left:90px;top:653px;width:2px;height:2px;background:#1e6b41;"></div><div class="r" style="left:101px;top:641px;width:1px;height:20px;background:#c6c6c6;"></div><div class="t" style="top:644.13px;font-size:13.2px;line-height:13.2px;color:#444;left:118.4px;">Monthly Waterfall</div><div class="r" style="left:238px;top:641px;width:1px;height:20px;background:#c6c6c6;"></div><div class="t" style="top:644.21px;font-size:13.1px;line-height:13.1px;color:#444;left:254.6px;">Quarterly Waterfalls</div><div class="r" style="left:387px;top:637px;width:149px;height:25px;background:#fff;border-left:1px solid #c6c6c6;border-right:1px solid #c6c6c6;box-sizing:border-box;"></div><div class="r" style="left:387px;top:660px;width:149px;height:2px;background:#217346;"></div><div class="t" style="top:643.91px;font-size:13.1px;line-height:13.1px;color:#1e6b41;font-weight:bold;left:399.3px;">TTM Rolling Metrics</div><svg class="r" style="left:569px;top:643px;overflow:visible" width="16" height="16" viewBox="0 0 16 16"><circle cx="8" cy="8" r="7.2" fill="none" stroke="#777" stroke-width="1.2"/><path d="M8 4 V12 M4 8 H12" stroke="#777" stroke-width="1.6"/></svg><div class="r" style="left:632px;top:647px;width:2px;height:2px;background:#aaa;"></div><div class="r" style="left:632px;top:651px;width:2px;height:2px;background:#aaa;"></div><div class="r" style="left:632px;top:655px;width:2px;height:2px;background:#aaa;"></div><div class="r" style="left:649px;top:644px;width:426px;height:15px;background:#f0f0f0;"></div><div class="r" style="left:649px;top:644px;width:15px;height:15px;background:#fff;border:1px solid #ababab;box-sizing:border-box;"></div><svg class="r" style="left:654px;top:648px;overflow:visible" width="5" height="8" viewBox="0 0 5 8"><path d="M5 0 L0 4 L5 8 Z" fill="#222"/></svg><div class="r" style="left:663px;top:644px;width:73px;height:15px;background:#fff;border:1px solid #ababab;box-sizing:border-box;"></div><div class="r" style="left:1061px;top:644px;width:15px;height:15px;background:#fff;border:1px solid #ababab;box-sizing:border-box;"></div><svg class="r" style="left:1066px;top:648px;overflow:visible" width="5" height="8" viewBox="0 0 5 8"><path d="M0 0 L5 4 L0 8 Z" fill="#222"/></svg><div class="r" style="left:1px;top:665px;width:1096px;height:22px;background:#f3f3f3;border-top:1px solid #d6d6d6;box-sizing:border-box;"></div><div class="r" style="left:0px;top:687px;width:1098px;height:1px;background:#217346;"></div><div class="t" style="top:671.63px;font-size:10.6px;line-height:10.6px;color:#333;left:12.3px;">Ready</div><div class="r" style="left:786px;top:666px;width:40px;height:21px;background:#c6c6c6;"></div><svg class="r" style="left:63px;top:669px;overflow:visible" width="14" height="14" viewBox="0 0 14 14">
    <circle cx="3" cy="3" r="2.9" fill="#555"/>
    <path d="M1.6 6.5 V12.4 H12.4 V2 H7" fill="none" stroke="#555" stroke-width="1.3"/>
    <rect x="6.5" y="1.2" width="6.5" height="2.4" fill="#555"/>
    <g fill="#555"><rect x="3.5" y="5.6" width="2" height="1.1"/><rect x="6.5" y="5.6" width="2" height="1.1"/><rect x="9.5" y="5.6" width="2" height="1.1"/>
    <rect x="3.5" y="8" width="2" height="1.1"/><rect x="6.5" y="8" width="2" height="1.1"/><rect x="9.5" y="8" width="2" height="1.1"/>
    <rect x="3.5" y="10.3" width="2" height="1.1"/><rect x="6.5" y="10.3" width="2" height="1.1"/><rect x="9.5" y="10.3" width="2" height="1.1"/></g>
    </svg><svg class="r" style="left:93px;top:668px;overflow:visible" width="17" height="17" viewBox="0 0 17 17">
    <path d="M5.8 1.8 A6.3 6.3 0 0 0 6.5 13.3" fill="none" stroke="#444" stroke-width="1.2" stroke-dasharray="2 1.3"/>
    <path d="M6.8 1 V6.5 M4.6 4.5 L6.8 6.8 L9 4.5" fill="none" stroke="#444" stroke-width="1.1"/>
    <path d="M11 3.5 L13 5.3 L11 7" fill="none" stroke="#444" stroke-width="1.1"/>
    <path d="M8 8 L15.5 15.8 M15 8 L7.8 15.5" stroke="#444" stroke-width="1.7"/>
    </svg><svg class="r" style="left:799px;top:669px;overflow:visible" width="13" height="13" viewBox="0 0 13 13"><rect x="0" y="0" width="13" height="13" fill="#6a6a6a"/>
    <g fill="#d8d8d8"><rect x="1.3" y="1.3" width="2.8" height="2.8"/><rect x="5.1" y="1.3" width="2.8" height="2.8"/><rect x="8.9" y="1.3" width="2.8" height="2.8"/>
    <rect x="1.3" y="5.1" width="2.8" height="2.8"/><rect x="5.1" y="5.1" width="2.8" height="2.8"/><rect x="8.9" y="5.1" width="2.8" height="2.8"/>
    <rect x="1.3" y="8.9" width="2.8" height="2.8"/><rect x="5.1" y="8.9" width="2.8" height="2.8"/><rect x="8.9" y="8.9" width="2.8" height="2.8"/></g></svg><svg class="r" style="left:839px;top:669px;overflow:visible" width="14" height="13" viewBox="0 0 14 13"><g fill="none" stroke="#666" stroke-width="1.2"><rect x="0.6" y="0.6" width="12.8" height="11.8"/>
    <rect x="3.6" y="2.8" width="6.8" height="7.4"/></g><g fill="#666"><rect x="5" y="4.3" width="4" height="0.9"/><rect x="5" y="6.1" width="4" height="0.9"/><rect x="5" y="7.9" width="4" height="0.9"/></g></svg><svg class="r" style="left:879px;top:669px;overflow:visible" width="14" height="13" viewBox="0 0 14 13"><g fill="none" stroke="#666" stroke-width="1.2"><rect x="0.6" y="0.6" width="12.8" height="11.8"/>
    <path d="M0.6 7.5 H8.4 V0.6 M4.4 0.6 V7.5"/></g></svg><div class="r" style="left:912px;top:675px;width:9px;height:1.2px;background:#555;"></div><div class="r" style="left:925px;top:675.5px;width:100px;height:1px;background:#666;"></div><div class="r" style="left:973px;top:670px;width:5px;height:12px;background:#444;"></div><div class="r" style="left:1029px;top:675px;width:9px;height:1.2px;background:#555;"></div><div class="r" style="left:1032.9px;top:671px;width:1.2px;height:9px;background:#555;"></div><div class="t" style="top:671.03px;font-size:11.3px;line-height:11.3px;color:#333;left:113px;">Accessibility: Investigate</div><div class="t" style="top:670.52px;font-size:11.2px;line-height:11.2px;color:#333;left:1051px;">100%</div>
</body></html>
